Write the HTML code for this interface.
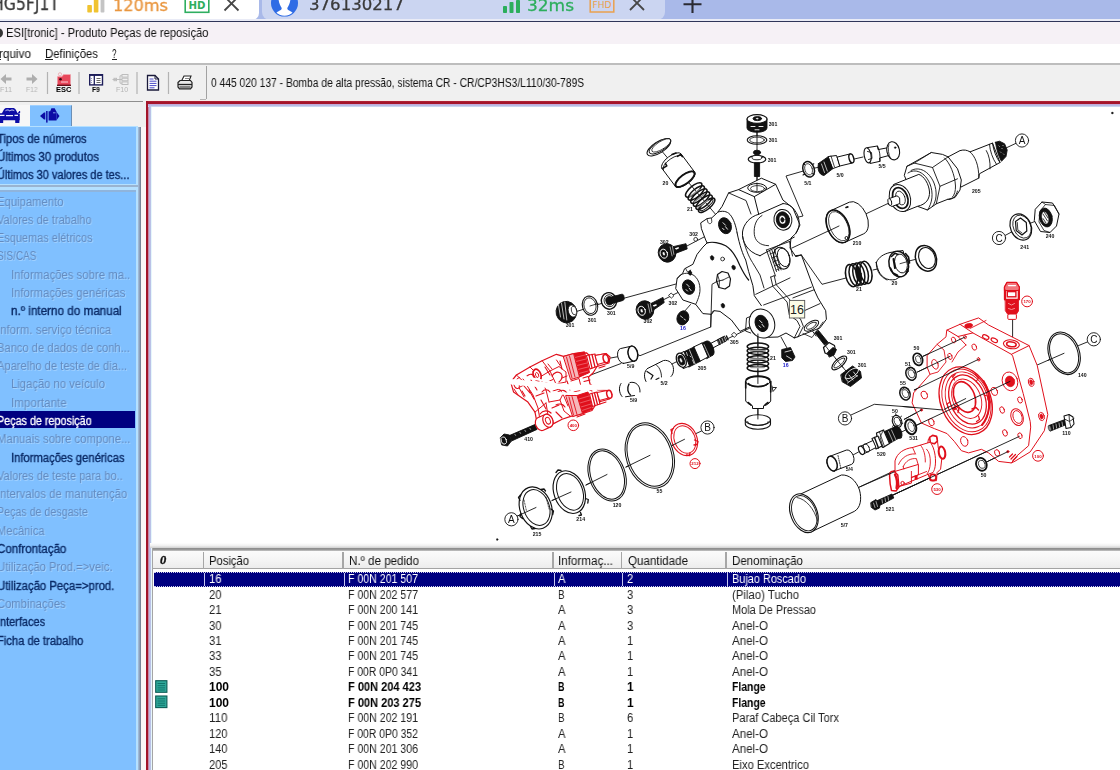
<!DOCTYPE html>
<html lang="pt">
<head>
<meta charset="utf-8">
<title>ESI[tronic] - Produto Peças de reposição</title>
<style>
*{box-sizing:border-box;margin:0;padding:0}
html,body{width:1120px;height:770px;overflow:hidden;background:#fff}
body{position:relative;font-family:"Liberation Sans",sans-serif;font-size:12px;color:#000}
.a{position:absolute}
.t{position:absolute;white-space:nowrap;transform-origin:0 50%;will-change:transform}
svg{position:absolute;overflow:visible}
</style>
</head>
<body>
<!-- remote session tab strip -->
<div class="a" style="left:0;top:0;width:1120px;height:20px;background:#a9b9e9"></div>
<div class="a" style="left:0;top:0;width:259px;height:20px;background:#fff;border-radius:0 0 7px 0"></div>
<div class="a" style="left:262px;top:0;width:403px;height:20px;background:#cbd5f1;border-radius:0 0 8px 8px"></div>
<div class="a" style="left:0;top:19px;width:1120px;height:2px;background:#e9ebf6"></div>
<div class="a" style="left:0;top:21px;width:1120px;height:1px;background:#30365a"></div>
<svg width="1120" height="21" viewBox="0 0 1120 21" style="left:0;top:0;overflow:hidden">
  <!-- signal bars 1 -->
  <rect x="87.3" y="5" width="4.6" height="7.5" rx="0.8" fill="#f0c330"/>
  <rect x="93.8" y="-1" width="4.6" height="13.5" rx="0.8" fill="#f0c330"/>
  <rect x="100.6" y="-1" width="3.8" height="13.5" rx="0.8" fill="#c4c4c4"/>
  <!-- HD badge -->
  <rect x="185.2" y="-3" width="23.6" height="15.3" fill="#fff" stroke="#2fae60" stroke-width="1.6"/>
  <text x="197" y="8.8" font-family="'DejaVu Sans','Liberation Sans',sans-serif" font-weight="bold" font-size="11" fill="#2fae60" text-anchor="middle" textLength="17" lengthAdjust="spacingAndGlyphs">HD</text>
  <!-- close 1 -->
  <path d="M224.5 -3.5L238.5 10.5M238.5 -3.5L224.5 10.5" stroke="#474747" stroke-width="1.8" fill="none"/>
  <!-- avatar -->
  <circle cx="284.5" cy="3.1" r="13.5" fill="#2f6ce5"/>
  <clipPath id="avc"><circle cx="284.5" cy="3.1" r="12.6"/></clipPath>
  <path clip-path="url(#avc)" d="M278.7 -6V0.5C279.2 4 280.6 6 281.7 8C281.9 9.6 280.5 10.4 278.6 11.2C277.2 11.8 276.3 12.6 275 14.5V18H294V14.5C292.7 12.6 291.8 11.8 290.4 11.2C288.5 10.4 287.1 9.6 287.3 8C288.4 6 289.8 4 290.3 0.5V-6z" fill="#fff"/>
  <!-- signal bars 2 -->
  <rect x="503" y="6" width="4" height="7" rx="0.8" fill="#2cae5c"/>
  <rect x="509.5" y="2" width="4" height="11" rx="0.8" fill="#2cae5c"/>
  <rect x="516" y="0" width="4" height="13" rx="0.8" fill="#2cae5c"/>
  <!-- FHD badge -->
  <rect x="590.2" y="-3" width="23.6" height="15" fill="none" stroke="#eaa04e" stroke-width="1.5"/>
  <text x="602" y="7.5" font-family="'DejaVu Sans','Liberation Sans',sans-serif" font-size="9.5" fill="#eaa04e" text-anchor="middle" textLength="19" lengthAdjust="spacingAndGlyphs">FHD</text>
  <!-- close 2 -->
  <path d="M630 -4L644 10M644 -4L630 10" stroke="#474747" stroke-width="1.8" fill="none"/>
  <!-- plus -->
  <path d="M683.5 4.2H701.5M692.5 -6V13" stroke="#2a2a33" stroke-width="2.1" fill="none"/>
</svg>
<!-- window chrome -->
<div class="a" style="left:0;top:22px;width:1120px;height:22px;background:#f6f1f6"></div>
<div class="a" style="left:0;top:44px;width:1120px;height:19px;background:#fff"></div>
<div class="a" style="left:0;top:63px;width:1120px;height:1.5px;background:#bdbdbd"></div>
<div class="a" style="left:0;top:64.5px;width:1120px;height:38px;background:#f0f0f0"></div>
<!-- app icon sliver -->
<div class="a" style="left:-7px;top:28px;width:10px;height:10px;border-radius:5px;background:#333"></div>
<!-- menu underlines -->
<div class="a" style="left:45px;top:58.8px;width:7.5px;height:1px;background:#222"></div>
<div class="a" style="left:111.5px;top:58.8px;width:5px;height:1px;background:#222"></div>
<div class="a" style="left:-2px;top:58.8px;width:2.5px;height:1px;background:#222"></div>
<!-- toolbar -->
<div class="a" style="left:0;top:100.8px;width:143px;height:1.2px;background:#8e8e8e"></div>
<div class="a" style="left:205.5px;top:66px;width:1.3px;height:33px;background:#a2a2a2"></div>
<div class="a" style="left:200px;top:98.5px;width:6px;height:1px;background:#b5b5b5"></div>
<svg width="210" height="40" viewBox="0 62 210 40" style="left:0;top:62px">
  <!-- back / fwd arrows (disabled) -->
  <path d="M0.5 79L6 74V77.5H11.5V80.5H6V84z" fill="#aeaeae"/>
  <path d="M37.5 79L32 74V77.5H26.5V80.5H32V84z" fill="#aeaeae"/>
  <!-- separators -->
  <g stroke="#b3b3b3" stroke-width="1.2"><path d="M47.5 72V94M79 72V94M137 72V94M168.5 72V94"/></g>
  <!-- ESC folder -->
  <path d="M57.5 76.5h4.5l1.5 -2h7v10.5h-13z" fill="#e8475a"/>
  <path d="M57 85.300h14" stroke="#6b0f1a" stroke-width="1.4"/>
  <path d="M57.5 76.5h4.5l1.5 -2h7" stroke="#f3a5ae" stroke-width="1" fill="none"/>
  <circle cx="60.5" cy="79.2" r="1.3" fill="#3b0810"/>
  <path d="M61 82h7" stroke="#fbd0d5" stroke-width="1"/>
  <circle cx="60" cy="74.3" r="1.6" fill="none" stroke="#e9a5ad" stroke-width="0.8"/>
  <!-- F9 panel icon -->
  <rect x="89.7" y="74.7" width="12.8" height="10.2" fill="#fff" stroke="#1e1e5a" stroke-width="1.4"/>
  <path d="M89.7 75h12.8" stroke="#1e1e5a" stroke-width="1.8"/>
  <path d="M94.3 75V85" stroke="#1e1e5a" stroke-width="1.3"/>
  <path d="M96.5 78.5h4M96.5 80.5h4M96.5 82.5h4" stroke="#555" stroke-width="0.9"/>
  <path d="M91.3 78v5" stroke="#7b7bb5" stroke-width="1" stroke-dasharray="1 1"/>
  <!-- F10 tree icon (disabled) -->
  <g fill="none" stroke="#bdbdbd" stroke-width="1">
    <rect x="122" y="74.5" width="6" height="2.6"/><rect x="122" y="78.2" width="6" height="2.6"/><rect x="122" y="81.9" width="6" height="2.6"/>
    <path d="M112.5 79.5h7.5M120 75.800V83.200M120 75.800h2M120 83.200h2M120 79.5h2"/>
    <rect x="114" y="78.3" width="2.5" height="2.4"/>
  </g>
  <!-- document icon -->
  <path d="M147.5 75.5h7.5l3.5 3.5v11h-11z" fill="#fff" stroke="#1a1a3a" stroke-width="1.3"/>
  <path d="M155 75.5v3.5h3.5" fill="none" stroke="#1a1a3a" stroke-width="1"/>
  <path d="M149.5 79h4M149.5 81.200h7M149.5 83.400h7M149.5 85.600h7M149.5 87.800h5" stroke="#4a4ac8" stroke-width="1"/>
  <!-- printer icon -->
  <path d="M181.5 81l2.5 -5h7l-2 5z" fill="#fff" stroke="#222" stroke-width="1.1"/>
  <path d="M185 78.5h4" stroke="#777" stroke-width="0.9"/>
  <path d="M178 82.5l2 -2h10.5l1.5 2v4.5l-1.5 1.800h-11l-1.5 -1.800z" fill="#e9e9e9" stroke="#222" stroke-width="1.2"/>
  <path d="M178 84.5h14" stroke="#222" stroke-width="1.3"/>
  <path d="M179.5 87h11" stroke="#222" stroke-width="1"/>
</svg>
<!-- sidebar -->
<div class="a" style="left:0;top:102px;width:146px;height:668px;background:#f0f0f0"></div>
<div class="a" style="left:141px;top:127px;width:5px;height:643px;background:#fbf6f8"></div>
<!-- sidebar tabs -->
<div class="a" style="left:0;top:105px;width:29.5px;height:21px;background:#f7f7f7"></div>
<div class="a" style="left:29.5px;top:105px;width:42px;height:22px;background:#80c0ff;border-right:1.5px solid #6b8fb5;border-top:1px solid #9fd0ff"></div>
<div class="a" style="left:0;top:125.7px;width:138px;height:61px;background:#b4e0ff"></div>
<div class="a" style="left:138px;top:126.5px;width:3px;height:644px;background:linear-gradient(90deg,#a9c4e0,#8a9db8 55%,#6d7786)"></div>
<div class="a" style="left:0;top:126.5px;width:135.5px;height:57.5px;background:#80c0ff"></div>
<div class="a" style="left:0;top:187px;width:138px;height:583px;background:#b4e0ff"></div>
<div class="a" style="left:0;top:184.7px;width:138px;height:2.5px;background:#9ab4d0"></div>
<div class="a" style="left:0;top:191.5px;width:135.5px;height:580px;background:#80c0ff"></div>
<div class="a" style="left:0;top:190px;width:136px;height:1.5px;background:#8fb4dc"></div>
<!-- selected item -->
<div class="a" style="left:0;top:411px;width:135px;height:17px;background:#000080"></div>
<svg width="80" height="24" viewBox="0 104 80 24" style="left:0;top:104px">
  <!-- car icon -->
  <g fill="#0c0ca6">
    <path d="M1.5 114l2.3 -4.300c0.6 -1.2 1.6 -1.8 3 -1.800h6c1.4 0 2.4 0.6 3 1.800l2.2 4.300z"/>
    <path d="M-1 113.300h19.800c0.6 0 1 0.4 1 1v6h-21.500z"/>
    <rect x="-1" y="119.5" width="4.2" height="3.6" rx="0.6"/><rect x="15.2" y="119.5" width="4.2" height="3.6" rx="0.6"/>
    <path d="M17.8 113l1.5 -2h0.800v2z"/>
  </g>
  <path d="M5.5 110.700c1.5 -1 3 -1 4.3 0.200c1.3 -1.2 3 -1.2 4.5 -0.2" fill="none" stroke="#e8ecff" stroke-width="0.9"/>
  <path d="M0 115.300h4.500M6 115.600h7M14.5 115.300h3.5" stroke="#f0f3ff" stroke-width="1.3"/>
  <!-- pump icon -->
  <g fill="#0c0ca6">
    <path d="M48.6 111.300h1.600l1.2 -3h3.300l1.5 3h0.300v9.300h-7.900z"/>
    <path d="M40 116l4 -3.500h1.300v7h-1.300z"/>
    <rect x="46.1" y="111" width="1.5" height="11.6"/>
    <path d="M56.5 112l3 4l-3 4.200z"/>
  </g>
  <path d="M53 112.800h2.5" stroke="#7f9fe8" stroke-width="1"/>
</svg>
<!-- main panel frame -->
<div class="a" style="left:146px;top:101px;width:980px;height:680px;background:#fff"></div>
<div class="a" style="left:146px;top:101px;width:980px;height:3px;background:linear-gradient(#b3283c,#a3142a 40%,#a8152c)"></div>
<div class="a" style="left:146px;top:101px;width:2px;height:680px;background:#a3142a"></div>
<div class="a" style="left:148px;top:104px;width:1px;height:680px;background:#c48aa8"></div>
<div class="a" style="left:148px;top:104px;width:975px;height:3px;background:linear-gradient(#c4a4d4,#b6c0e6 60%,#d8e6f6)"></div>
<div class="a" style="left:149px;top:105px;width:2px;height:670px;background:linear-gradient(90deg,#c0aedc,#b8c8ea)"></div>
<div class="a" style="left:151px;top:107px;width:1px;height:670px;background:#e6f6fc"></div>
<div class="a" style="left:146px;top:100px;width:980px;height:1px;background:#f8ece8"></div>

<!-- parts table -->
<div class="a" style="left:150px;top:543px;width:972px;height:5px;background:linear-gradient(#ffffff,#f1f1f1 50%,#cfcfcf)"></div>
<div class="a" style="left:151.5px;top:547.8px;width:970px;height:3.4px;background:linear-gradient(#8a8a8a,#9c9c9c 60%,#c9c9c9)"></div>
<div class="a" style="left:151.5px;top:547.8px;width:1.5px;height:225px;background:#a5a5a5"></div>
<div class="a" style="left:153px;top:551.2px;width:969px;height:18.3px;background:linear-gradient(#fbfbfb,#f5f5f5 50%,#ececec);border-bottom:1.4px solid #a3a3a3"></div>
<div class="a" style="left:202.6px;top:552px;width:1.6px;height:17px;background:#a6a6a6"></div>
<div class="a" style="left:342px;top:552px;width:1.6px;height:17px;background:#a6a6a6"></div>
<div class="a" style="left:552px;top:552px;width:1.6px;height:17px;background:#a6a6a6"></div>
<div class="a" style="left:620.6px;top:552px;width:1.6px;height:17px;background:#a6a6a6"></div>
<div class="a" style="left:725px;top:552px;width:1.6px;height:17px;background:#a6a6a6"></div>
<div class="t" style="left:159.6px;top:553px;font-family:'Liberation Serif',serif;font-style:italic;font-weight:bold;font-size:12.5px;line-height:14px;color:#111;-webkit-text-stroke:0.4px #111">0</div>
<!-- selected row -->
<div class="a" style="left:154px;top:571.5px;width:968px;height:15px;background:#000080;border-top:1px dotted #cfcfe8;border-bottom:1px dotted #cfcfe8"></div>
<div class="a" style="left:204px;top:573px;width:1px;height:13px;background:#c8c8f0"></div>
<div class="a" style="left:343.5px;top:573px;width:1px;height:13px;background:#c8c8f0"></div>
<div class="a" style="left:553.5px;top:573px;width:1px;height:13px;background:#c8c8f0"></div>
<div class="a" style="left:622px;top:573px;width:1px;height:13px;background:#c8c8f0"></div>
<div class="a" style="left:726.5px;top:573px;width:1px;height:13px;background:#c8c8f0"></div>
<!-- row icons -->
<svg width="14" height="32" viewBox="155 679 14 32" style="left:155px;top:679px">
  <g>
    <rect x="155.7" y="680.7" width="11.2" height="11.6" fill="#2fa89a" stroke="#0d5c55" stroke-width="1.1"/>
    <path d="M157.5 683.5h7.600M157.5 685.700h7.600M157.5 687.900h7.600M157.5 690h7.6" stroke="#0f6f66" stroke-width="0.9"/>
    <rect x="155.7" y="696" width="11.2" height="11.6" fill="#2fa89a" stroke="#0d5c55" stroke-width="1.1"/>
    <path d="M157.5 698.800h7.600M157.5 701h7.600M157.5 703.200h7.600M157.5 705.300h7.6" stroke="#0f6f66" stroke-width="0.9"/>
  </g>
</svg>

<!-- exploded view drawing -->
<svg width="1120" height="770" viewBox="0 0 1120 770" style="left:0;top:0">
<clipPath id="dclip"><rect x="150" y="107" width="970" height="440"/></clipPath>
<g clip-path="url(#dclip)" stroke-linecap="round">
<path d="M660 149L717 216" fill="none" stroke="#111" stroke-width="0.9" stroke-linejoin="round" />
<path d="M757 128L757 189" fill="none" stroke="#111" stroke-width="0.9" stroke-linejoin="round" />
<path d="M757.9 334L757.9 421" fill="none" stroke="#111" stroke-width="0.9" stroke-linejoin="round" />
<path d="M863 157L808.6 169.5L786 176L803 216L790 219" fill="none" stroke="#111" stroke-width="0.9" stroke-linejoin="round" />
<path d="M792 248L839 226" fill="none" stroke="#111" stroke-width="0.9" stroke-linejoin="round" />
<path d="M865 214.3L889 203" fill="none" stroke="#111" stroke-width="0.9" stroke-linejoin="round" />
<path d="M1006 148L1016 143.3" fill="none" stroke="#111" stroke-width="0.9" stroke-linejoin="round" />
<path d="M789 256.5L801.4 255L822 284.3L846 278" fill="none" stroke="#111" stroke-width="0.9" stroke-linejoin="round" />
<path d="M873 270L882 268" fill="none" stroke="#111" stroke-width="0.9" stroke-linejoin="round" />
<path d="M905 262L917 259" fill="none" stroke="#111" stroke-width="0.9" stroke-linejoin="round" />
<path d="M575 312L606 302" fill="none" stroke="#111" stroke-width="0.9" stroke-linejoin="round" />
<path d="M623 298.5L676 284" fill="none" stroke="#111" stroke-width="0.9" stroke-linejoin="round" />
<path d="M663 300L688 287.5" fill="none" stroke="#111" stroke-width="0.9" stroke-linejoin="round" />
<path d="M686 246.5L724 226.5" fill="none" stroke="#111" stroke-width="0.9" stroke-linejoin="round" />
<path d="M684 312L690.5 304.5" fill="none" stroke="#111" stroke-width="0.9" stroke-linejoin="round" />
<path d="M723 280L717 281.4L712 284.3L710.7 327L640 355.7L636 353.5" fill="none" stroke="#111" stroke-width="0.9" stroke-linejoin="round" />
<path d="M609 358.3L620 356.3" fill="none" stroke="#111" stroke-width="0.9" stroke-linejoin="round" />
<path d="M726 339.5L750 328" fill="none" stroke="#111" stroke-width="0.9" stroke-linejoin="round" />
<path d="M672 364L679 360.5" fill="none" stroke="#111" stroke-width="0.9" stroke-linejoin="round" />
<path d="M590.7 375L621 363.5" fill="none" stroke="#111" stroke-width="0.9" stroke-linejoin="round" />
<path d="M787 348L781 337" fill="none" stroke="#111" stroke-width="0.9" stroke-linejoin="round" />
<path d="M811 329L816 336" fill="none" stroke="#111" stroke-width="0.9" stroke-linejoin="round" />
<path d="M832 354L850 376" fill="none" stroke="#111" stroke-width="0.9" stroke-linejoin="round" />
<path d="M517.5 516L536 507.5" fill="none" stroke="#111" stroke-width="0.9" stroke-linejoin="round" />
<path d="M552 500.5L571 492" fill="none" stroke="#111" stroke-width="0.9" stroke-linejoin="round" />
<path d="M586 485L607 474.5" fill="none" stroke="#111" stroke-width="0.9" stroke-linejoin="round" />
<path d="M626 467L650 455.3" fill="none" stroke="#111" stroke-width="0.9" stroke-linejoin="round" />
<path d="M672 445.5L684.5 439.3" fill="none" stroke="#111" stroke-width="0.9" stroke-linejoin="round" />
<path d="M694 434.5L701.5 431" fill="none" stroke="#111" stroke-width="0.9" stroke-linejoin="round" />
<path d="M536 427L546 422" fill="none" stroke="#111" stroke-width="0.9" stroke-linejoin="round" />
<path d="M851 415L874.3 404.3L903 406.5L943 410" fill="none" stroke="#111" stroke-width="0.9" stroke-linejoin="round" />
<path d="M853 455L858.5 452" fill="none" stroke="#111" stroke-width="0.9" stroke-linejoin="round" />
<path d="M899 433.3L907 429.3" fill="none" stroke="#111" stroke-width="0.9" stroke-linejoin="round" />
<path d="M915.5 425.7L1010 381.4" fill="none" stroke="#111" stroke-width="0.9" stroke-linejoin="round" />
<path d="M904.3 419.3L921.4 410" fill="none" stroke="#111" stroke-width="0.9" stroke-linejoin="round" />
<path d="M914.3 390L978.6 359.3" fill="none" stroke="#111" stroke-width="0.9" stroke-linejoin="round" />
<path d="M917.5 372L950 356.4" fill="none" stroke="#111" stroke-width="0.9" stroke-linejoin="round" />
<path d="M923 356.3L965 337.1" fill="none" stroke="#111" stroke-width="0.9" stroke-linejoin="round" />
<path d="M944.3 409.3L965.7 398.6" fill="none" stroke="#111" stroke-width="0.9" stroke-linejoin="round" />
<path d="M859.5 487L897 469.5" fill="none" stroke="#111" stroke-width="0.9" stroke-linejoin="round" />
<path d="M893 495L1019.3 436.4" fill="none" stroke="#111" stroke-width="0.9" stroke-linejoin="round" />
<path d="M986.5 462L1007.9 451.6" fill="none" stroke="#111" stroke-width="0.9" stroke-linejoin="round" />
<path d="M1012.6 319L1012.6 343" fill="none" stroke="#111" stroke-width="0.9" stroke-linejoin="round" />
<path d="M1037.2 365L1064 353.3" fill="none" stroke="#111" stroke-width="0.9" stroke-linejoin="round" />
<path d="M1078.5 345.6L1087.8 341.8" fill="none" stroke="#111" stroke-width="0.9" stroke-linejoin="round" />
<path d="M1005 235.5L1021 227" fill="none" stroke="#111" stroke-width="0.9" stroke-linejoin="round" />
<path d="M1031 223L1046 217" fill="none" stroke="#111" stroke-width="0.9" stroke-linejoin="round" />
<path d="M747 119V128A10 4.3 0 0 0 767 128V119z" fill="#111" stroke="#111" stroke-width="0.9" stroke-linejoin="round" stroke-linecap="round" />
<ellipse cx="757" cy="119" rx="10" ry="4.4" fill="#fff" stroke="#111" stroke-width="1.1" />
<ellipse cx="757.3" cy="118.6" rx="4.3" ry="2" fill="#111" stroke="#111" stroke-width="0.9" />
<ellipse cx="757.3" cy="118.6" rx="1.6" ry="0.8" fill="#fff" stroke="#111" stroke-width="0.3" />
<path d="M751 126.5h4M759 126.5h4M755 129.8h4" fill="none" stroke="#fff" stroke-width="0.9" stroke-linejoin="round" stroke-linecap="round" />
<text x="773" y="125.8" font-family="'Liberation Sans',sans-serif" font-size="5.2" font-weight="bold" fill="#111" text-anchor="middle">301</text>
<ellipse cx="757" cy="140" rx="9.8" ry="4.3" fill="#fff" stroke="#111" stroke-width="1.1" />
<ellipse cx="757" cy="140" rx="7.3" ry="2.9" fill="#fff" stroke="#111" stroke-width="0.8" />
<path d="M757 131L757 144" fill="none" stroke="#111" stroke-width="0.9" stroke-linejoin="round" />
<text x="773" y="141.8" font-family="'Liberation Sans',sans-serif" font-size="5.2" font-weight="bold" fill="#111" text-anchor="middle">301</text>
<ellipse cx="757" cy="152.5" rx="3.6" ry="2.3" fill="#111" stroke="#111" stroke-width="0.9" />
<ellipse cx="757" cy="159.3" rx="8.8" ry="3.8" fill="#fff" stroke="#111" stroke-width="1.2" />
<ellipse cx="757" cy="157.6" rx="5" ry="2.2" fill="#fff" stroke="#111" stroke-width="0.9" />
<path d="M754.4 163V176.5h5.2V163z" fill="#111" stroke="#111" stroke-width="0.9" stroke-linejoin="round" stroke-linecap="round" />
<text x="772" y="161.8" font-family="'Liberation Sans',sans-serif" font-size="5.2" font-weight="bold" fill="#111" text-anchor="middle">301</text>
<path d="M757 176L757 189" fill="none" stroke="#111" stroke-width="0.9" stroke-linejoin="round" />
<ellipse cx="658.8" cy="147.4" rx="5.6" ry="13.4" fill="#fff" stroke="#111" stroke-width="1.1" transform="rotate(58 658.8 147.4)" />
<ellipse cx="660" cy="146.2" rx="4.9" ry="12.4" fill="#fff" stroke="#111" stroke-width="0.9" transform="rotate(58 660 146.2)" />
<ellipse cx="661.3" cy="145.4" rx="3.9" ry="11" fill="none" stroke="#111" stroke-width="0.7" transform="rotate(58 661.3 145.4)" />
<path d="M661.8 168.2L675.4 186.4A5 12 53.2 0 0 694.6 172L681 153.8A5 12 53.2 0 0 661.8 168.2z" fill="#fff" stroke="#111" stroke-width="1.0" stroke-linejoin="round"/>
<ellipse cx="685" cy="179.2" rx="5" ry="12" fill="#fff" stroke="#111" stroke-width="1.0" transform="rotate(53.2 685 179.2)" />
<ellipse cx="685" cy="179.2" rx="4.4" ry="11.3" fill="#fff" stroke="#111" stroke-width="1.6" transform="rotate(53 685 179.2)" />
<path d="M682.9 156.3A5.0 12 55.3 0 0 663.2 170.0" fill="none" stroke="#111" stroke-width="0.9" stroke-linejoin="round" stroke-linecap="round" />
<path d="M663.2 168.2l3.6 -2.4l-1.4 -2.4M677.5 156.4l3.2 -2l1.6 2.2" fill="none" stroke="#111" stroke-width="1.6" stroke-linejoin="round" stroke-linecap="round" />
<path d="M672 154.5l4 -1.5" fill="none" stroke="#111" stroke-width="1.6" stroke-linejoin="round" stroke-linecap="round" />
<text x="665.5" y="185.3" font-family="'Liberation Sans',sans-serif" font-size="5.2" font-weight="bold" fill="#111" text-anchor="middle">20</text>
<ellipse cx="693.7" cy="189.9" rx="3.9" ry="10.2" fill="none" stroke="#111" stroke-width="1.5" transform="rotate(49.8 693.7 189.9)" />
<ellipse cx="696.3" cy="193" rx="3.9" ry="10.2" fill="none" stroke="#111" stroke-width="1.5" transform="rotate(49.8 696.3 193)" />
<ellipse cx="698.9" cy="196.1" rx="3.9" ry="10.2" fill="none" stroke="#111" stroke-width="1.5" transform="rotate(49.8 698.9 196.1)" />
<ellipse cx="701.5" cy="199.1" rx="3.9" ry="10.2" fill="none" stroke="#111" stroke-width="1.5" transform="rotate(49.8 701.5 199.1)" />
<ellipse cx="704.1" cy="202.2" rx="3.9" ry="10.2" fill="none" stroke="#111" stroke-width="1.5" transform="rotate(49.8 704.1 202.2)" />
<ellipse cx="706.7" cy="205.3" rx="3.9" ry="10.2" fill="none" stroke="#111" stroke-width="1.5" transform="rotate(49.8 706.7 205.3)" />
<ellipse cx="706.3" cy="204.8" rx="2.6" ry="8.4" fill="none" stroke="#111" stroke-width="1.0" transform="rotate(50 706.3 204.8)" />
<path d="M690 196.5l10 -7.5M694 202l10 -7.5M698 207.5l10 -7.5" fill="none" stroke="#8c8c8c" stroke-width="1.2" stroke-linejoin="round" stroke-linecap="round" />
<text x="690" y="210.8" font-family="'Liberation Sans',sans-serif" font-size="5.2" font-weight="bold" fill="#111" text-anchor="middle">21</text>
<path d="M717.9 212.1L722.1 206.4L728.6 192.9L738.6 189.6L761.4 178.2L775.7 184.3L782.9 200L792.9 208L800 225L795.7 233.6L791 238L790 248L795.7 256.4L801.4 255L814.3 290L817.9 297.9L825.7 310.7L826.4 319.3L820 327.9L801.4 335.2L794.5 338L786 333L778 337L768.6 337.3L757.1 334.3L750.7 326.4L740 331.4L731.4 320L720 311.4L714.3 310.7L711.4 314.3L702.9 313.6L695.7 304.3L682.9 300L675.7 288.6L677.1 278.6L682.9 272.9L684.5 268.8L692.9 264.3L697.1 254.300L702.9 247.1L707.1 242.9L705.7 240L701.4 228.6L700.7 222.9L707.1 218.6L711.4 217.9z" fill="#fff" stroke="#111" stroke-width="1.0" stroke-linejoin="round" stroke-linecap="round" />
<path d="M738.6 189.6L754.3 196.6L775.7 184.3" fill="none" stroke="#111" stroke-width="1.0" stroke-linejoin="round" />
<path d="M754.3 196.6L758.6 213.8" fill="none" stroke="#111" stroke-width="1.0" stroke-linejoin="round" />
<path d="M728.6 192.9L746 200.5L751 214" fill="none" stroke="#111" stroke-width="0.9" stroke-linejoin="round" />
<ellipse cx="757.1" cy="187.9" rx="9.4" ry="4.4" fill="#fff" stroke="#111" stroke-width="1.0" />
<ellipse cx="757.5" cy="188.6" rx="7" ry="3" fill="#fff" stroke="#111" stroke-width="0.8" />
<path d="M757 183L757 190.5" fill="none" stroke="#111" stroke-width="0.9" stroke-linejoin="round" />
<path d="M758.6 214.3L782.9 203.6M760 255.7L783 243L794.3 237.1" fill="none" stroke="#111" stroke-width="1.0" stroke-linejoin="round" stroke-linecap="round" />
<path d="M758.6 214.3C750 216.5 743.5 224 742.5 232C741.8 241.5 747 252 760 255.7" fill="none" stroke="#111" stroke-width="1.0" stroke-linejoin="round" stroke-linecap="round" />
<path d="M762 215.5C756 219 753.6 226 754.3 234.300C755 240.5 759.5 245.5 768.6 245.7" fill="none" stroke="#111" stroke-width="0.9" stroke-linejoin="round" stroke-linecap="round" />
<path d="M782.9 203.6C789 203.5 794 207.5 797.5 215C800 221.5 800 228 795.7 233.6" fill="none" stroke="#111" stroke-width="1.0" stroke-linejoin="round" stroke-linecap="round" />
<ellipse cx="782.9" cy="219.8" rx="9" ry="10.4" fill="#fff" stroke="#111" stroke-width="1.0" transform="rotate(-10 782.9 219.8)" />
<ellipse cx="782.9" cy="219.8" rx="6.6" ry="8" fill="#111" stroke="#111" stroke-width="0.9" transform="rotate(-10 782.9 219.8)" />
<ellipse cx="782.4" cy="219.8" rx="3.2" ry="4.3" fill="#fff" stroke="#111" stroke-width="0.4" transform="rotate(-10 782.4 219.8)" />
<ellipse cx="782.4" cy="219.8" rx="1.5" ry="2.2" fill="#111" stroke="#111" stroke-width="0.9" transform="rotate(-10 782.4 219.8)" />
<path d="M737.1 232.9C739.5 245 743 255 745.7 260L748.6 271.4L752.9 285.7L754.3 295.7L761.4 305.7" fill="none" stroke="#111" stroke-width="1.0" stroke-linejoin="round" stroke-linecap="round" />
<path d="M742.5 236C744.5 246 748.5 256.5 752.5 262.5L760 275L764 288" fill="none" stroke="#111" stroke-width="0.9" stroke-linejoin="round" stroke-linecap="round" />
<path d="M717.9 212.1C722 210.5 727 211 730 214.5C733.5 218.5 736 226 737.1 232.9" fill="none" stroke="#111" stroke-width="1.0" stroke-linejoin="round" stroke-linecap="round" />
<path d="M707.1 242.9C712 241.5 720 242.5 725.7 245.7C731 249 736 256 740 265.7C743 272 746.5 277.5 748.6 280" fill="none" stroke="#111" stroke-width="1.2" stroke-linejoin="round" stroke-linecap="round" />
<path d="M766.5 250L789.5 241.5M766.5 250L775.5 276M789.5 241.5L792.5 256" fill="none" stroke="#111" stroke-width="0.9" stroke-linejoin="round" stroke-linecap="round" />
<ellipse cx="781.8" cy="258.2" rx="7.8" ry="11.2" fill="#fff" stroke="#111" stroke-width="1.1" transform="rotate(-18 781.8 258.2)" />
<ellipse cx="783.6" cy="257.4" rx="5.8" ry="9.5" fill="#fff" stroke="#111" stroke-width="0.9" transform="rotate(-18 783.6 257.4)" />
<path d="M769.5 250.5l7 21M771.8 249.700l7 21M774.1 248.900l7 21" fill="none" stroke="#111" stroke-width="0.9" stroke-linejoin="round" stroke-linecap="round" />
<path d="M770 254l5.5 -2M771.5 258l5.5 -2M773 262l5.5 -2M774.5 266l5.5 -2M776 270l5.5 -2" fill="none" stroke="#111" stroke-width="0.7" stroke-linejoin="round" stroke-linecap="round" />
<path d="M755.7 294.3L790 277.9M763.6 305L811.4 287.1M792.9 297.9L814 289.800M804.3 310.7L820 303.6" fill="none" stroke="#111" stroke-width="0.9" stroke-linejoin="round" stroke-linecap="round" />
<path d="M795.7 256.4L801.4 255" fill="none" stroke="#111" stroke-width="0.9" stroke-linejoin="round" stroke-linecap="round" />
<path d="M770.7 277.1L772.9 286.4L787.1 302.1L789.3 315L797.1 320.7L800 326.4L794.3 337.9" fill="none" stroke="#111" stroke-width="0.9" stroke-linejoin="round" stroke-linecap="round" />
<path d="M774.2 275.700L776.2 284.700L790.5 300.5L792.7 313L800.4 318.800L803.4 326.400L798 337" fill="none" stroke="#111" stroke-width="0.9" stroke-linejoin="round" stroke-linecap="round" />
<path d="M770.7 277.1l3.5 -1.4" fill="none" stroke="#111" stroke-width="0.9" stroke-linejoin="round" stroke-linecap="round" />
<ellipse cx="811.4" cy="325.7" rx="8.2" ry="4" fill="#fff" stroke="#111" stroke-width="1.0" transform="rotate(-32 811.4 325.7)" />
<ellipse cx="811.4" cy="325.7" rx="5.6" ry="2.4" fill="#fff" stroke="#111" stroke-width="0.8" transform="rotate(-32 811.4 325.7)" />
<path d="M803 333.5L812 337.5L823 322" fill="none" stroke="#111" stroke-width="0.8" stroke-linejoin="round" stroke-linecap="round" />
<ellipse cx="762" cy="323.5" rx="12.5" ry="14.8" fill="#fff" stroke="#111" stroke-width="1.0" transform="rotate(-20 762 323.5)" />
<path d="M750.5 316.5L746.5 318L745.5 331L750.7 333" fill="none" stroke="#111" stroke-width="0.9" stroke-linejoin="round" stroke-linecap="round" />
<ellipse cx="725" cy="225.7" rx="6.2" ry="8.2" fill="#111" stroke="#111" stroke-width="0.9" transform="rotate(-20 725 225.7)" />
<path d="M723.0 222.7l2.5 2.5M725.5 226.7l2 2.5M722.5 228.2l1.5 1.5" fill="none" stroke="#fff" stroke-width="0.9" stroke-linejoin="round" stroke-linecap="round" />
<ellipse cx="688.6" cy="287.1" rx="6" ry="7.4" fill="#111" stroke="#111" stroke-width="0.9" transform="rotate(-20 688.6 287.1)" />
<path d="M686.6 284.1l2.5 2.5M689.1 288.1l2 2.5M686.1 289.6l1.5 1.5" fill="none" stroke="#fff" stroke-width="0.9" stroke-linejoin="round" stroke-linecap="round" />
<ellipse cx="761.6" cy="323.4" rx="6.3" ry="8.4" fill="#111" stroke="#111" stroke-width="0.9" transform="rotate(-20 761.6 323.4)" />
<path d="M759.6 320.4l2.5 2.5M762.1 324.4l2 2.5M759.1 325.9l1.5 1.5" fill="none" stroke="#fff" stroke-width="0.9" stroke-linejoin="round" stroke-linecap="round" />
<path d="M677.1 278.6C680 273 688 271.5 694 275.5C700 280 701.5 290 698.5 297.5C697.5 300.5 696.5 303 695.7 304.3" fill="none" stroke="#111" stroke-width="0.9" stroke-linejoin="round" stroke-linecap="round" />
<ellipse cx="712.1" cy="257.9" rx="1.7" ry="2.4" fill="#111" stroke="#111" stroke-width="0.5" transform="rotate(-20 712.1 257.9)" />
<ellipse cx="733.6" cy="267.5" rx="1.7" ry="2.4" fill="#111" stroke="#111" stroke-width="0.5" transform="rotate(-20 733.6 267.5)" />
<ellipse cx="690" cy="272.9" rx="1.7" ry="2.4" fill="#111" stroke="#111" stroke-width="0.5" transform="rotate(-20 690 272.9)" />
<ellipse cx="722.9" cy="305.7" rx="1.7" ry="2.4" fill="#111" stroke="#111" stroke-width="0.5" transform="rotate(-20 722.9 305.7)" />
<circle cx="722.6" cy="259" r="1.9" fill="#fff" stroke="#111" stroke-width="0.8"/>
<path d="M717.5 274.5L722 271.5L728 273L730.5 279L729.5 286L725 289L719 287.5L716.5 281z" fill="#fff" stroke="#111" stroke-width="1.2" stroke-linejoin="round" stroke-linecap="round" />
<path d="M717.5 274.5L719.5 281L719 287.5" fill="none" stroke="#111" stroke-width="0.8" stroke-linejoin="round" stroke-linecap="round" />
<path d="M723 280L729 277" fill="none" stroke="#111" stroke-width="0.8" stroke-linejoin="round" />
<path d="M707 219l1 3.5c1 1.8 3.5 1.4 3.8 -0.800l-0.3 -3.2" fill="none" stroke="#111" stroke-width="0.8" stroke-linejoin="round" stroke-linecap="round" />
<path d="M685.7 268.600l1.5 3c1.4 1.2 3.5 0.5 3.5 -1.5" fill="none" stroke="#111" stroke-width="0.8" stroke-linejoin="round" stroke-linecap="round" />
<path d="M711.4 314.300l1.5 -3.200l1.4 -0.4" fill="none" stroke="#111" stroke-width="0.8" stroke-linejoin="round" stroke-linecap="round" />
<path d="M723 280L717 281.4L712 284.3L710.7 327" fill="none" stroke="#111" stroke-width="0.9" stroke-linejoin="round" />
<rect x="789.4" y="300.4" width="15.3" height="17.6" fill="#fcfce6" stroke="#555" stroke-width="0.9"/>
<text x="797" y="313.8" font-family="'Liberation Sans',sans-serif" font-size="12.5" font-weight="normal" fill="#222" text-anchor="middle">16</text>
<path d="M672.1 246.9L686 243.70000000000002L687.2 248.9L674.1 253.9z" fill="#111" stroke="#111" stroke-width="0.9" stroke-linejoin="round" stroke-linecap="round" />
<path d="M673.1 249.9L678.1 247.9" fill="none" stroke="#fff" stroke-width="1.6" stroke-linejoin="round" stroke-linecap="round" />
<ellipse cx="667.1" cy="252.9" rx="8.8" ry="9.3" fill="#111" stroke="#111" stroke-width="0.9" transform="rotate(-20 667.1 252.9)" />
<ellipse cx="663.8" cy="253.7" rx="3.6" ry="4.6" fill="none" stroke="#fff" stroke-width="0.9" transform="rotate(-20 663.8 253.7)" />
<ellipse cx="663.8" cy="253.7" rx="1.2" ry="1.8" fill="#fff" stroke="#111" stroke-width="0.2" transform="rotate(-20 663.8 253.7)" />
<path d="M670.1 246.9l2 9M672.4 246.4l1.5 8" fill="none" stroke="#fff" stroke-width="0.6" stroke-linejoin="round" stroke-linecap="round" />
<text x="664.3" y="243.9" font-family="'Liberation Sans',sans-serif" font-size="5.2" font-weight="bold" fill="#111" text-anchor="middle">302</text>
<circle cx="695.7" cy="239.3" r="1.9" fill="#fff" stroke="#111" stroke-width="0.8"/>
<text x="693.6" y="236.1" font-family="'Liberation Sans',sans-serif" font-size="5.2" font-weight="bold" fill="#111" text-anchor="middle">302</text>
<path d="M650 304L663 297.4L664.2 302.6L652 311z" fill="#111" stroke="#111" stroke-width="0.9" stroke-linejoin="round" stroke-linecap="round" />
<path d="M651 307L656 305" fill="none" stroke="#fff" stroke-width="1.6" stroke-linejoin="round" stroke-linecap="round" />
<ellipse cx="645" cy="310" rx="8.8" ry="9.3" fill="#111" stroke="#111" stroke-width="0.9" transform="rotate(-20 645 310)" />
<ellipse cx="641.7" cy="310.8" rx="3.6" ry="4.6" fill="none" stroke="#fff" stroke-width="0.9" transform="rotate(-20 641.7 310.8)" />
<ellipse cx="641.7" cy="310.8" rx="1.2" ry="1.8" fill="#fff" stroke="#111" stroke-width="0.2" transform="rotate(-20 641.7 310.8)" />
<path d="M648 304l2 9M650.3 303.5l1.5 8" fill="none" stroke="#fff" stroke-width="0.6" stroke-linejoin="round" stroke-linecap="round" />
<text x="647.9" y="323.2" font-family="'Liberation Sans',sans-serif" font-size="5.2" font-weight="bold" fill="#111" text-anchor="middle">302</text>
<path d="M671.4 293.300l2.6 2.400l-2.6 2.400l-2.6 -2.400z" fill="#fff" stroke="#111" stroke-width="0.8" stroke-linejoin="round" stroke-linecap="round" />
<text x="672.9" y="305.4" font-family="'Liberation Sans',sans-serif" font-size="5.2" font-weight="bold" fill="#111" text-anchor="middle">302</text>
<ellipse cx="566.4" cy="312.1" rx="10.3" ry="10.8" fill="#111" stroke="#111" stroke-width="0.9" transform="rotate(-15 566.4 312.1)" />
<ellipse cx="572.5" cy="311" rx="4.2" ry="6.2" fill="#fff" stroke="#111" stroke-width="0.8" transform="rotate(-15 572.5 311)" />
<ellipse cx="574" cy="310.5" rx="2.6" ry="4.4" fill="#fff" stroke="#111" stroke-width="0.7" transform="rotate(-15 574 310.5)" />
<path d="M558.5 305l2 12M561.5 303l2.5 16M564.8 302l2 18" fill="none" stroke="#fff" stroke-width="0.7" stroke-linejoin="round" stroke-linecap="round" />
<text x="570" y="326.8" font-family="'Liberation Sans',sans-serif" font-size="5.2" font-weight="bold" fill="#111" text-anchor="middle">301</text>
<ellipse cx="590" cy="305.7" rx="7.6" ry="9.7" fill="#fff" stroke="#111" stroke-width="1.1" transform="rotate(-15 590 305.7)" />
<ellipse cx="590" cy="305.7" rx="6" ry="8" fill="#fff" stroke="#111" stroke-width="0.8" transform="rotate(-15 590 305.7)" />
<path d="M590 306L598 303.5" fill="none" stroke="#111" stroke-width="0.8" stroke-linejoin="round" />
<text x="592.1" y="321.8" font-family="'Liberation Sans',sans-serif" font-size="5.2" font-weight="bold" fill="#111" text-anchor="middle">301</text>
<ellipse cx="609" cy="300.9" rx="7.6" ry="8.3" fill="#fff" stroke="#111" stroke-width="1.4" transform="rotate(-15 609 300.9)" />
<ellipse cx="609.5" cy="300.7" rx="5.4" ry="6" fill="#fff" stroke="#111" stroke-width="0.8" transform="rotate(-15 609.5 300.7)" />
<ellipse cx="609.3" cy="300.8" rx="3.4" ry="4.2" fill="#111" stroke="#111" stroke-width="0.9" transform="rotate(-15 609.3 300.8)" />
<path d="M609 297.6l12.5 -3.3c1.6 -0.2 2.2 0.6 2.4 2l0.3 2.2c0 1.2 -0.6 1.8 -2 2.2l-11.5 3.2z" fill="#111" stroke="#111" stroke-width="0.9" stroke-linejoin="round" stroke-linecap="round" />
<text x="611.4" y="314.7" font-family="'Liberation Sans',sans-serif" font-size="5.2" font-weight="bold" fill="#111" text-anchor="middle">301</text>
<ellipse cx="682.9" cy="317.9" rx="5.8" ry="7.2" fill="#111" stroke="#111" stroke-width="0.9" transform="rotate(20 682.9 317.9)" />
<path d="M680.5 316l2 1.5M684 319l1.5 1" fill="none" stroke="#fff" stroke-width="0.8" stroke-linejoin="round" stroke-linecap="round" />
<text x="682.9" y="330.4" font-family="'Liberation Sans',sans-serif" font-size="5.2" font-weight="bold" fill="#1818c8" text-anchor="middle">16</text>
<path d="M782 349.5L790.5 347.5L795 357L792.5 360.5L785.5 361.5L782 358z" fill="#111" stroke="#111" stroke-width="0.9" stroke-linejoin="round" stroke-linecap="round" />
<path d="M785 352l6 -1.5M786.5 356l5 3" fill="none" stroke="#fff" stroke-width="0.8" stroke-linejoin="round" stroke-linecap="round" />
<text x="785.7" y="366.8" font-family="'Liberation Sans',sans-serif" font-size="5.2" font-weight="bold" fill="#1818c8" text-anchor="middle">16</text>
<ellipse cx="808.6" cy="169.3" rx="5.6" ry="8" fill="#fff" stroke="#111" stroke-width="1.5" transform="rotate(-18 808.6 169.3)" />
<ellipse cx="808.6" cy="169.3" rx="3.7" ry="5.8" fill="#fff" stroke="#111" stroke-width="0.7" transform="rotate(-18 808.6 169.3)" />
<path d="M803.5 163.5l1.2 1M803 175l1.5 -0.800M813.8 163.800l-1.3 0.800M814 174.5l-1.4 -0.9" fill="none" stroke="#111" stroke-width="1.1" stroke-linejoin="round" stroke-linecap="round" />
<text x="807.9" y="184.8" font-family="'Liberation Sans',sans-serif" font-size="5.2" font-weight="bold" fill="#111" text-anchor="middle">5/1</text>
<path d="M818.5 163.5L828.5 156.5L833 168.5L824 175.5C819 175 817 169 818.5 163.5z" fill="#111" stroke="#111" stroke-width="0.9" stroke-linejoin="round" stroke-linecap="round" />
<path d="M828.5 156.5L836.5 155.5L840 166L833 168.5z" fill="#fff" stroke="#111" stroke-width="1.0" stroke-linejoin="round" stroke-linecap="round" />
<path d="M821.5 164l3 8.5M824 162l3.3 9" fill="none" stroke="#fff" stroke-width="0.7" stroke-linejoin="round" stroke-linecap="round" />
<path d="M831 156l3.5 11" fill="none" stroke="#111" stroke-width="0.8" stroke-linejoin="round" stroke-linecap="round" />
<path d="M837.5 157L850.5 153.800L852.3 163L840 166z" fill="#fff" stroke="#111" stroke-width="1.0" stroke-linejoin="round" stroke-linecap="round" />
<ellipse cx="851.4" cy="158.4" rx="2.3" ry="4.6" fill="#fff" stroke="#111" stroke-width="1.4" transform="rotate(-15 851.4 158.4)" />
<text x="840" y="176.8" font-family="'Liberation Sans',sans-serif" font-size="5.2" font-weight="bold" fill="#111" text-anchor="middle">5/0</text>
<path d="M867.5 147.6L877.5 146L878 149.6L888.5 147.6L890 155.2L879.5 158L880 161.3L870.5 163.4z" fill="#fff" stroke="#111" stroke-width="1.0" stroke-linejoin="round" stroke-linecap="round" />
<ellipse cx="867.6" cy="155.3" rx="3.4" ry="7.7" fill="#fff" stroke="#111" stroke-width="1.1" transform="rotate(-10 867.6 155.3)" />
<path d="M867.5 151.5L871.5 152.5L872 158.5L868.5 159.5" fill="none" stroke="#111" stroke-width="0.9" stroke-linejoin="round" stroke-linecap="round" />
<path d="M877.5 146C879.5 150 880.5 156 880 161.3" fill="none" stroke="#111" stroke-width="0.9" stroke-linejoin="round" stroke-linecap="round" />
<ellipse cx="893.2" cy="150.8" rx="6.3" ry="9.2" fill="#fff" stroke="#111" stroke-width="1.1" transform="rotate(-12 893.2 150.8)" />
<path d="M888.8 144.6C887.6 148.5 888.4 154.5 890.6 158.8" fill="none" stroke="#111" stroke-width="0.8" stroke-linejoin="round" stroke-linecap="round" />
<circle cx="895.2" cy="147.6" r="0.9" fill="#111" stroke="#111" stroke-width="0.4"/>
<text x="882" y="167.5" font-family="'Liberation Sans',sans-serif" font-size="5.2" font-weight="bold" fill="#111" text-anchor="middle">5/5</text>
<path d="M845.2 242.2L863.7 233.8A10.4 17.3 -24.4 0 0 849.3 202.2L830.8 210.6A10.4 17.3 -24.4 0 0 845.2 242.2z" fill="#fff" stroke="#111" stroke-width="1.0" stroke-linejoin="round"/>
<ellipse cx="838" cy="226.4" rx="10.4" ry="17.3" fill="#fff" stroke="#111" stroke-width="1.0" transform="rotate(-24.4 838 226.4)" />
<ellipse cx="838" cy="226.4" rx="10.4" ry="17.3" fill="#fff" stroke="#111" stroke-width="1.6" transform="rotate(-24.5 838 226.4)" />
<ellipse cx="838.8" cy="226.2" rx="8.8" ry="15.6" fill="none" stroke="#111" stroke-width="0.7" transform="rotate(-24.5 838.8 226.2)" />
<path d="M829 230.8L839 226" fill="none" stroke="#111" stroke-width="0.9" stroke-linejoin="round" />
<path d="M846 207.5l1.8 -0.6" fill="none" stroke="#111" stroke-width="1.7" stroke-linejoin="round" stroke-linecap="round" />
<circle cx="846.5" cy="238" r="1.5" fill="#fff" stroke="#111" stroke-width="1.0"/>
<text x="857" y="244.7" font-family="'Liberation Sans',sans-serif" font-size="5.2" font-weight="bold" fill="#111" text-anchor="middle">210</text>
<path d="M948.1 156.9L960 150.6C964 149.5 967 150 970 151.9L992.5 143.1L1000 162.5L979.4 173.8L978.8 178.1L961.3 186.9z" fill="#fff" stroke="#111" stroke-width="1.0" stroke-linejoin="round" stroke-linecap="round" />
<path d="M970 151.9C975 156 979 165 978.8 178.1" fill="none" stroke="#111" stroke-width="0.9" stroke-linejoin="round" stroke-linecap="round" />
<path d="M986.3 150.6C989 155 990.5 162 990 168.8" fill="none" stroke="#111" stroke-width="0.9" stroke-linejoin="round" stroke-linecap="round" />
<path d="M995.5 142.3L999.5 141.2L1004.6 143.8L1007.2 150L1006 156.5L1001.5 161.3C998.5 156.5 996.5 149.5 995.5 142.3z" fill="#111" stroke="#111" stroke-width="0.9" stroke-linejoin="round" stroke-linecap="round" />
<path d="M992.5 143.1C993.5 150 996 157.5 1000 162.5" fill="none" stroke="#111" stroke-width="1.0" stroke-linejoin="round" stroke-linecap="round" />
<path d="M999 146l0.3 0.3M1002 148.5l0.3 0.3M1000.5 152l0.3 0.3M1003.5 154l0.3 0.3M1003 145.5l0.3 0.3" fill="none" stroke="#fff" stroke-width="0.8" stroke-linejoin="round" stroke-linecap="round" />
<path d="M989.5 144.3C990 151 992.5 158.5 996.5 164.3" fill="none" stroke="#111" stroke-width="0.9" stroke-linejoin="round" stroke-linecap="round" />
<path d="M904.4 175L906.9 166.3L931.3 152.5L942.5 154.4L948.1 156.9L957.5 168.8L961.3 180L960 190L955 197.5L947.5 199.4L936.3 203.8L927.5 210L917.5 206.3z" fill="#fff" stroke="#111" stroke-width="1.0" stroke-linejoin="round" stroke-linecap="round" />
<path d="M906.9 166.3L914.4 163.1L932.5 167.5L948.1 156.9M932.5 167.5L940 186.3L936.3 203.8M940 186.3L957.5 178.8" fill="none" stroke="#111" stroke-width="0.9" stroke-linejoin="round" stroke-linecap="round" />
<path d="M914.4 163.1L931.3 152.5" fill="none" stroke="#111" stroke-width="0.8" stroke-linejoin="round" stroke-linecap="round" />
<path d="M944.5 158C950 163 955 175 955.5 186C955.6 191 954.5 195 952.5 197" fill="none" stroke="#111" stroke-width="0.9" stroke-linejoin="round" stroke-linecap="round" />
<path d="M947.5 199.4C951 200.5 956 197 957.5 191" fill="none" stroke="#111" stroke-width="0.9" stroke-linejoin="round" stroke-linecap="round" />
<path d="M908 173C915 168 925 172 930 184C933.5 193 932.5 203 927.5 210" fill="none" stroke="#111" stroke-width="0.9" stroke-linejoin="round" stroke-linecap="round" />
<path d="M911 170.5C919 166 929 171 934 183C937.5 192 936.5 201 932.5 206.5" fill="none" stroke="#111" stroke-width="0.9" stroke-linejoin="round" stroke-linecap="round" />
<path d="M893.8 184.4L918.8 174.4C924 176 929 184 929.5 192C929.8 199 926 204.5 917.5 206.3L905 211.3z" fill="#fff" stroke="#111" stroke-width="1.0" stroke-linejoin="round" stroke-linecap="round" />
<ellipse cx="900" cy="198" rx="10.2" ry="14" fill="#fff" stroke="#111" stroke-width="1.0" transform="rotate(-22 900 198)" />
<ellipse cx="900.3" cy="198" rx="7.2" ry="10.8" fill="#fff" stroke="#111" stroke-width="1.8" transform="rotate(-22 900.3 198)" />
<ellipse cx="900.5" cy="198" rx="4.4" ry="7.2" fill="#fff" stroke="#111" stroke-width="0.8" transform="rotate(-22 900.5 198)" />
<path d="M889.4 198.5L897 195.8L899.6 197.8L899.8 203.5L892 206.5L888.6 204.5z" fill="#fff" stroke="#111" stroke-width="1.0" stroke-linejoin="round" stroke-linecap="round" />
<ellipse cx="889.8" cy="202" rx="1.8" ry="3.6" fill="#fff" stroke="#111" stroke-width="0.9" transform="rotate(-15 889.8 202)" />
<text x="976.3" y="192.8" font-family="'Liberation Sans',sans-serif" font-size="5.2" font-weight="bold" fill="#111" text-anchor="middle">205</text>
<circle cx="1022" cy="140.5" r="6.6" fill="#fff" stroke="#111" stroke-width="0.9"/>
<text x="1022" y="144.2" font-family="'Liberation Sans',sans-serif" font-size="10" font-weight="normal" fill="#111" text-anchor="middle">A</text>
<circle cx="999" cy="238" r="6.6" fill="#fff" stroke="#111" stroke-width="0.9"/>
<text x="999" y="241.8" font-family="'Liberation Sans',sans-serif" font-size="10" font-weight="normal" fill="#111" text-anchor="middle">C</text>
<ellipse cx="1020.8" cy="227" rx="10.3" ry="13.6" fill="#fff" stroke="#111" stroke-width="1.2" transform="rotate(-24 1020.8 227)" />
<ellipse cx="1022" cy="226.6" rx="8.6" ry="12" fill="none" stroke="#111" stroke-width="0.8" transform="rotate(-24 1022 226.6)" />
<path d="M1015.5 221.5L1020.5 218L1026.3 222.5L1026.8 231L1022 235L1016.2 230.5z" fill="#fff" stroke="#111" stroke-width="1.2" stroke-linejoin="round" stroke-linecap="round" />
<path d="M1017.3 222.5L1017.8 229.8L1022 233" fill="none" stroke="#111" stroke-width="0.8" stroke-linejoin="round" stroke-linecap="round" />
<text x="1024.7" y="248.8" font-family="'Liberation Sans',sans-serif" font-size="5.2" font-weight="bold" fill="#111" text-anchor="middle">241</text>
<path d="M1035.5 209L1042 202L1052.5 203L1059 214L1056.5 226L1050 232.5L1040.5 231.5L1034.5 221z" fill="#fff" stroke="#111" stroke-width="1.0" stroke-linejoin="round" stroke-linecap="round" />
<path d="M1042 202L1045.5 204.5L1054.5 205.5L1059 214M1045.5 204.5L1040 211L1039 222L1044 230.5L1050 232.5" fill="none" stroke="#111" stroke-width="0.8" stroke-linejoin="round" stroke-linecap="round" />
<ellipse cx="1045.8" cy="217.5" rx="6.3" ry="9.6" fill="#111" stroke="#111" stroke-width="0.9" transform="rotate(-14 1045.8 217.5)" />
<ellipse cx="1045.2" cy="217.8" rx="3.4" ry="6.3" fill="#fff" stroke="#111" stroke-width="0.4" transform="rotate(-14 1045.2 217.8)" />
<path d="M1043 214l4.5 7M1043 218.5l3 4.5M1044.5 212.5l3.5 5.5" fill="none" stroke="#111" stroke-width="0.8" stroke-linejoin="round" stroke-linecap="round" />
<text x="1050" y="237.8" font-family="'Liberation Sans',sans-serif" font-size="5.2" font-weight="bold" fill="#111" text-anchor="middle">240</text>
<ellipse cx="851.5" cy="275.6" rx="5.7" ry="11.3" fill="none" stroke="#111" stroke-width="1.5" transform="rotate(-12.4 851.5 275.6)" />
<ellipse cx="855.1" cy="274.8" rx="5.7" ry="11.3" fill="none" stroke="#111" stroke-width="1.5" transform="rotate(-12.4 855.1 274.8)" />
<ellipse cx="858.8" cy="274" rx="5.7" ry="11.3" fill="none" stroke="#111" stroke-width="1.5" transform="rotate(-12.4 858.8 274)" />
<ellipse cx="862.4" cy="273.2" rx="5.7" ry="11.3" fill="none" stroke="#111" stroke-width="1.5" transform="rotate(-12.4 862.4 273.2)" />
<ellipse cx="866" cy="272.4" rx="5.7" ry="11.3" fill="none" stroke="#111" stroke-width="1.5" transform="rotate(-12.4 866 272.4)" />
<ellipse cx="858.5" cy="274" rx="2.8" ry="8.4" fill="#111" stroke="#111" stroke-width="0.5" transform="rotate(-12 858.5 274)" />
<text x="859" y="291.3" font-family="'Liberation Sans',sans-serif" font-size="5.2" font-weight="bold" fill="#111" text-anchor="middle">21</text>
<path d="M876.3 262.5C879 256.5 884 254 890 252.5L903 250.5L908.5 271.5L895.5 279.5C887.5 281 878.5 278 876.3 262.5z" fill="#fff" stroke="#111" stroke-width="1.0" stroke-linejoin="round" stroke-linecap="round" />
<path d="M876.3 262.5C876 270 879.5 276.5 887 280" fill="none" stroke="#111" stroke-width="0.9" stroke-linejoin="round" stroke-linecap="round" />
<ellipse cx="898.7" cy="264" rx="9.7" ry="13" fill="#fff" stroke="#111" stroke-width="1.5" transform="rotate(-14 898.7 264)" />
<ellipse cx="901" cy="263.5" rx="6.2" ry="9.6" fill="#fff" stroke="#111" stroke-width="0.9" transform="rotate(-14 901 263.5)" />
<path d="M891.5 256.5l3.5 -3.300l3 1.300M890.5 268l2.5 5l4.5 2.300M905.5 253.5l3 3.5l1 6M908 268.5l-2 5" fill="none" stroke="#111" stroke-width="1.6" stroke-linejoin="round" stroke-linecap="round" />
<path d="M893.5 259l1.5 9" fill="none" stroke="#111" stroke-width="2" stroke-linejoin="round" stroke-linecap="round" />
<path d="M900 263.7L906 262" fill="none" stroke="#111" stroke-width="0.8" stroke-linejoin="round" />
<text x="894.5" y="285.3" font-family="'Liberation Sans',sans-serif" font-size="5.2" font-weight="bold" fill="#111" text-anchor="middle">20</text>
<ellipse cx="926" cy="258.3" rx="10.3" ry="13.2" fill="#fff" stroke="#111" stroke-width="1.5" transform="rotate(-22 926 258.3)" />
<ellipse cx="927" cy="258" rx="8" ry="10.8" fill="#fff" stroke="#111" stroke-width="1.1" transform="rotate(-22 927 258)" />
<ellipse cx="757.9" cy="346.5" rx="10.7" ry="3.6" fill="none" stroke="#111" stroke-width="1.5" />
<ellipse cx="757.9" cy="350.8" rx="10.7" ry="3.6" fill="none" stroke="#111" stroke-width="1.5" />
<ellipse cx="757.9" cy="355.1" rx="10.7" ry="3.6" fill="none" stroke="#111" stroke-width="1.5" />
<ellipse cx="757.9" cy="359.4" rx="10.7" ry="3.6" fill="none" stroke="#111" stroke-width="1.5" />
<ellipse cx="757.9" cy="363.7" rx="10.7" ry="3.6" fill="none" stroke="#111" stroke-width="1.5" />
<ellipse cx="757.9" cy="368" rx="10.7" ry="3.6" fill="none" stroke="#111" stroke-width="1.5" />
<path d="M750 350.5h15M750 359h15M751 367.5h13" fill="none" stroke="#9a9a9a" stroke-width="1.6" stroke-linejoin="round" stroke-linecap="round" />
<text x="773" y="360.4" font-family="'Liberation Sans',sans-serif" font-size="5.2" font-weight="bold" fill="#111" text-anchor="middle">21</text>
<path d="M757.9 334L757.9 346" fill="none" stroke="#111" stroke-width="0.9" stroke-linejoin="round" />
<path d="M745.7 381.4V401C748 404 751 405.5 752.5 405.800V408.5H763.5V405.800C766 405.5 769 404 770.7 401V381.4z" fill="#fff" stroke="#111" stroke-width="1.0" stroke-linejoin="round" stroke-linecap="round" />
<ellipse cx="757.9" cy="381.4" rx="12.3" ry="5.2" fill="#fff" stroke="#111" stroke-width="1.0" />
<path d="M746.5 379.5A12.3 5.2 0 0 1 769.5 379.5" fill="none" stroke="#111" stroke-width="2.0" stroke-linejoin="round" stroke-linecap="round" />
<path d="M748.5 383.800A10 4 0 0 0 767.5 383.8" fill="none" stroke="#111" stroke-width="1.8" stroke-linejoin="round" stroke-linecap="round" />
<path d="M745.7 381.4V388M770.7 381.4V392" fill="none" stroke="#111" stroke-width="1.6" stroke-linejoin="round" stroke-linecap="round" />
<path d="M748 402.5l3 2.300M768 402.5l-3 2.3" fill="none" stroke="#111" stroke-width="1.6" stroke-linejoin="round" stroke-linecap="round" />
<path d="M757.9 370L757.9 383.5" fill="none" stroke="#111" stroke-width="0.9" stroke-linejoin="round" />
<path d="M772 386l1 5.5l3.5 -4h-3.5" fill="none" stroke="#111" stroke-width="0.9" stroke-linejoin="round" stroke-linecap="round" />
<ellipse cx="757.9" cy="420" rx="12.6" ry="5.2" fill="#fff" stroke="#111" stroke-width="1.1" />
<path d="M745.3 420V424A12.6 5.2 0 0 0 770.5 424V420" fill="none" stroke="#111" stroke-width="1.1" stroke-linejoin="round" stroke-linecap="round" />
<path d="M747.5 421.5A10.4 4 0 0 0 768.3 421.5" fill="none" stroke="#111" stroke-width="0.8" stroke-linejoin="round" stroke-linecap="round" />
<path d="M757.9 408.5L757.9 419" fill="none" stroke="#111" stroke-width="0.9" stroke-linejoin="round" />
<path d="M815 333L824.5 345L828 342.300L818.5 330.5z" fill="#111" stroke="#111" stroke-width="0.9" stroke-linejoin="round" stroke-linecap="round" />
<path d="M823.5 347.5L829 342.5L834.5 345.5L835.5 350.5L830.5 355.5L825 353z" fill="#fff" stroke="#111" stroke-width="1.2" stroke-linejoin="round" stroke-linecap="round" />
<path d="M827.5 352.5L833 347.5L836.5 349.5L834 355L829.5 357z" fill="#111" stroke="#111" stroke-width="0.9" stroke-linejoin="round" stroke-linecap="round" />
<path d="M826 346.5l4.5 6" fill="none" stroke="#111" stroke-width="0.8" stroke-linejoin="round" stroke-linecap="round" />
<text x="838" y="340.4" font-family="'Liberation Sans',sans-serif" font-size="5.2" font-weight="bold" fill="#111" text-anchor="middle">301</text>
<ellipse cx="839.3" cy="362.9" rx="9.3" ry="4" fill="#fff" stroke="#111" stroke-width="1.2" transform="rotate(-42 839.3 362.9)" />
<ellipse cx="839.3" cy="362.9" rx="7" ry="2.3" fill="#fff" stroke="#111" stroke-width="0.8" transform="rotate(-42 839.3 362.9)" />
<path d="M835.5 358.5L843 367.5" fill="none" stroke="#111" stroke-width="0.8" stroke-linejoin="round" />
<text x="851.4" y="353.9" font-family="'Liberation Sans',sans-serif" font-size="5.2" font-weight="bold" fill="#111" text-anchor="middle">301</text>
<path d="M841 374.5L852.5 366L860.5 371.5L861.5 378L850.5 386.5L842.5 382z" fill="#111" stroke="#111" stroke-width="0.9" stroke-linejoin="round" stroke-linecap="round" />
<ellipse cx="852" cy="373.3" rx="7.8" ry="3.5" fill="none" stroke="#fff" stroke-width="0.8" transform="rotate(-36 852 373.3)" />
<path d="M845 378l3 3.5M849 375l4 5M853.5 372l3.5 4.5M847.5 383l10 -7.5" fill="none" stroke="#fff" stroke-width="0.8" stroke-linejoin="round" stroke-linecap="round" />
<text x="862.1" y="366.8" font-family="'Liberation Sans',sans-serif" font-size="5.2" font-weight="bold" fill="#111" text-anchor="middle">301</text>
<path d="M709 344.3L724.5 336.2L726.6 340.6L711 349z" fill="#fff" stroke="#111" stroke-width="1.0" stroke-linejoin="round" stroke-linecap="round" />
<path d="M717.5 339.8L724.5 336.2L726.6 340.6L719.5 344.6z" fill="#222" stroke="#111" stroke-width="0.8" stroke-linejoin="round" stroke-linecap="round" />
<path d="M719.5 339.5l1.6 4M722 338.3l1.6 4M724.3 337l1.5 3.8" fill="none" stroke="#fff" stroke-width="0.6" stroke-linejoin="round" stroke-linecap="round" />
<path d="M726.5 336l1.5 3.8" fill="none" stroke="#111" stroke-width="1.4" stroke-linejoin="round" stroke-linecap="round" />
<path d="M701 343.5L706.5 341L713 355L707 358.5z" fill="#111" stroke="#111" stroke-width="0.9" stroke-linejoin="round" stroke-linecap="round" />
<ellipse cx="709.8" cy="348" rx="3.3" ry="7.6" fill="#111" stroke="#111" stroke-width="0.9" transform="rotate(-24 709.8 348)" />
<path d="M704 344.5l5.5 12" fill="none" stroke="#fff" stroke-width="0.6" stroke-linejoin="round" stroke-linecap="round" />
<path d="M693.5 347L702 343L708 357L699.5 361.5z" fill="#fff" stroke="#111" stroke-width="1.0" stroke-linejoin="round" stroke-linecap="round" />
<path d="M683.5 352L694 347L700.3 361.3L689 367z" fill="#111" stroke="#111" stroke-width="0.9" stroke-linejoin="round" stroke-linecap="round" />
<path d="M689.5 350l5.5 13.5M686.5 352.5l1 3M692.5 360l1.5 3.5M690 356l1 1" fill="none" stroke="#fff" stroke-width="0.7" stroke-linejoin="round" stroke-linecap="round" />
<path d="M678 354.5L684 351.5L689.5 366L683.5 368.5z" fill="#fff" stroke="#111" stroke-width="1.0" stroke-linejoin="round" stroke-linecap="round" />
<ellipse cx="681.3" cy="360.2" rx="4.6" ry="7.4" fill="#fff" stroke="#111" stroke-width="1.3" transform="rotate(-22 681.3 360.2)" />
<ellipse cx="681.3" cy="360.2" rx="2.8" ry="5" fill="#111" stroke="#111" stroke-width="0.9" transform="rotate(-22 681.3 360.2)" />
<ellipse cx="681" cy="360.2" rx="1.2" ry="2.4" fill="#fff" stroke="#111" stroke-width="0.3" transform="rotate(-22 681 360.2)" />
<text x="702" y="369.7" font-family="'Liberation Sans',sans-serif" font-size="5.2" font-weight="bold" fill="#111" text-anchor="middle">305</text>
<path d="M734.3 332.600l2.6 2.400l-2.6 2.400l-2.6 -2.400z" fill="#fff" stroke="#111" stroke-width="0.8" stroke-linejoin="round" stroke-linecap="round" />
<text x="734.3" y="343.9" font-family="'Liberation Sans',sans-serif" font-size="5.2" font-weight="bold" fill="#111" text-anchor="middle">305</text>
<path d="M647.5 368.5L663.5 360.5C669 359.5 673.5 363.5 673.5 369.5C673.5 373 672.5 375 671 376.5" fill="none" stroke="#111" stroke-width="1.0" stroke-linejoin="round" stroke-linecap="round" />
<path d="M655.5 364.5C659 366 661.5 371.5 661.5 377" fill="none" stroke="#111" stroke-width="0.9" stroke-linejoin="round" stroke-linecap="round" />
<path d="M647.5 368.5C644 371 643.5 377 646 381.5" fill="none" stroke="#111" stroke-width="1.0" stroke-linejoin="round" stroke-linecap="round" />
<path d="M647 371.5L653 375.5L651 379" fill="none" stroke="#111" stroke-width="1.2" stroke-linejoin="round" stroke-linecap="round" />
<path d="M656 379.5l3 -1.5" fill="none" stroke="#111" stroke-width="1.1" stroke-linejoin="round" stroke-linecap="round" />
<text x="664" y="384.7" font-family="'Liberation Sans',sans-serif" font-size="5.2" font-weight="bold" fill="#111" text-anchor="middle">5/2</text>
<path d="M623.6 363.4L634.5 361A4.7 7.6 -12.4 0 0 631.3 346.2L620.4 348.6A4.7 7.6 -12.4 0 0 623.6 363.4z" fill="#fff" stroke="#111" stroke-width="1.0" stroke-linejoin="round"/>
<ellipse cx="632.9" cy="353.6" rx="4.7" ry="7.6" fill="#fff" stroke="#111" stroke-width="1.0" transform="rotate(-12.4 632.9 353.6)" />
<ellipse cx="632.9" cy="353.6" rx="4.7" ry="7.6" fill="#fff" stroke="#111" stroke-width="1.4" transform="rotate(-12 632.9 353.6)" />
<text x="630.7" y="367.5" font-family="'Liberation Sans',sans-serif" font-size="5.2" font-weight="bold" fill="#111" text-anchor="middle">5/9</text>
<path d="M621 383.5C618.5 387 619 393 622 396.5" fill="none" stroke="#111" stroke-width="1.0" stroke-linejoin="round" stroke-linecap="round" />
<path d="M625.5 396.800l9 -1.3" fill="none" stroke="#111" stroke-width="1.0" stroke-linejoin="round" stroke-linecap="round" />
<path d="M629 384C626.5 388.5 628 393 630.5 395" fill="none" stroke="#111" stroke-width="1.4" stroke-linejoin="round" stroke-linecap="round" />
<path d="M630 382.5C636 381 640.5 386 640 392" fill="none" stroke="#111" stroke-width="1.0" stroke-linejoin="round" stroke-linecap="round" />
<text x="633.6" y="402.2" font-family="'Liberation Sans',sans-serif" font-size="5.2" font-weight="bold" fill="#111" text-anchor="middle">5/9</text>
<path d="M509.3 435.6L534.8 424.6L537 429.4L511.5 441z" fill="#111" stroke="#111" stroke-width="0.9" stroke-linejoin="round" stroke-linecap="round" />
<path d="M515 434.5l0.5 0.800M520 432.5l0.5 0.800M525 430.5l0.5 0.800M530 428.5l0.5 0.8" fill="none" stroke="#fff" stroke-width="0.7" stroke-linejoin="round" stroke-linecap="round" />
<path d="M500.5 437.5L504 434L509.5 435L511 441.5L507.5 446L502 445z" fill="#111" stroke="#111" stroke-width="0.9" stroke-linejoin="round" stroke-linecap="round" />
<ellipse cx="503.8" cy="440.5" rx="2.6" ry="3.8" fill="none" stroke="#fff" stroke-width="0.8" transform="rotate(-20 503.8 440.5)" />
<text x="528.6" y="441.1" font-family="'Liberation Sans',sans-serif" font-size="5.2" font-weight="bold" fill="#111" text-anchor="middle">410</text>
<ellipse cx="649.8" cy="455.5" rx="23.6" ry="33.4" fill="#fff" stroke="#111" stroke-width="1.0" transform="rotate(-18 649.8 455.5)" />
<ellipse cx="649.8" cy="455.5" rx="21.7" ry="31.5" fill="#fff" stroke="#111" stroke-width="1.0" transform="rotate(-18 649.8 455.5)" />
<path d="M626 467L650 455.3" fill="none" stroke="#111" stroke-width="0.9" stroke-linejoin="round" />
<text x="659.5" y="493.3" font-family="'Liberation Sans',sans-serif" font-size="5.2" font-weight="bold" fill="#111" text-anchor="middle">55</text>
<ellipse cx="607.1" cy="475" rx="18" ry="26.8" fill="#fff" stroke="#111" stroke-width="1.0" transform="rotate(-20 607.1 475)" />
<ellipse cx="607.1" cy="475" rx="16.2" ry="25" fill="#fff" stroke="#111" stroke-width="1.0" transform="rotate(-20 607.1 475)" />
<path d="M586 485L607 474.5" fill="none" stroke="#111" stroke-width="0.9" stroke-linejoin="round" />
<text x="617" y="506.5" font-family="'Liberation Sans',sans-serif" font-size="5.2" font-weight="bold" fill="#111" text-anchor="middle">120</text>
<ellipse cx="569.3" cy="492.1" rx="15.3" ry="22" fill="#fff" stroke="#111" stroke-width="1.15" transform="rotate(-20 569.3 492.1)" />
<ellipse cx="570" cy="491.8" rx="12.6" ry="19" fill="#fff" stroke="#111" stroke-width="1.0" transform="rotate(-20 570 491.8)" />
<path d="M556 472.5l2 -2.5l3 0.5M585.5 498.5l2.8 1l-0.5 3.5M580.5 512.5l1 2.5l-2.5 0.5" fill="none" stroke="#111" stroke-width="1.3" stroke-linejoin="round" stroke-linecap="round" />
<path d="M552 500.5L571 492" fill="none" stroke="#111" stroke-width="0.9" stroke-linejoin="round" />
<text x="580.7" y="520.8" font-family="'Liberation Sans',sans-serif" font-size="5.2" font-weight="bold" fill="#111" text-anchor="middle">214</text>
<ellipse cx="535.7" cy="507.9" rx="15.8" ry="21.6" fill="#fff" stroke="#111" stroke-width="1.15" transform="rotate(-20 535.7 507.9)" />
<ellipse cx="536.5" cy="507.5" rx="12.8" ry="18.4" fill="#fff" stroke="#111" stroke-width="1.0" transform="rotate(-20 536.5 507.5)" />
<path d="M520.5 495l-2 2.5l1.5 3M521 513.5l-1 3l2.5 2M530.5 526.5l1.5 2.5l3 -0.5M551 509l2.5 2l-0.8 3.5M541 489.5l3 -0.5l1.5 2" fill="none" stroke="#111" stroke-width="1.3" stroke-linejoin="round" stroke-linecap="round" />
<path d="M524 500l2.5 11M546 497l3 12" fill="none" stroke="#111" stroke-width="0.7" stroke-linejoin="round" stroke-linecap="round" stroke-dasharray="1.5 1.5"/>
<path d="M517.5 516L536 507.5" fill="none" stroke="#111" stroke-width="0.9" stroke-linejoin="round" />
<text x="537" y="535.8" font-family="'Liberation Sans',sans-serif" font-size="5.2" font-weight="bold" fill="#111" text-anchor="middle">215</text>
<ellipse cx="684.4" cy="439.5" rx="12.6" ry="16.6" fill="#fff" stroke="#e0101c" stroke-width="1.1" transform="rotate(-22 684.4 439.5)" />
<ellipse cx="684.8" cy="439.5" rx="10.4" ry="14.2" fill="#fff" stroke="#e0101c" stroke-width="0.9" transform="rotate(-22 684.8 439.5)" />
<path d="M673.5 428.5l-2.5 1l1 4M694.5 440l3.5 1.5l-1 3l-3 0.5M690 453l-0.5 2.5l-3 -0.5" fill="none" stroke="#e0101c" stroke-width="1.3" stroke-linejoin="round" stroke-linecap="round" />
<path d="M672 445.5L684.5 439.3" fill="none" stroke="#111" stroke-width="0.9" stroke-linejoin="round" />
<circle cx="695" cy="463.6" r="5" fill="#fff" stroke="#e0101c" stroke-width="1.0"/>
<text x="695" y="465.2" font-family="'Liberation Sans',sans-serif" font-size="4.4" font-weight="bold" fill="#e0101c" text-anchor="middle">212</text>
<circle cx="511.4" cy="519.3" r="6.6" fill="#fff" stroke="#111" stroke-width="0.9"/>
<text x="511.4" y="523" font-family="'Liberation Sans',sans-serif" font-size="10" font-weight="normal" fill="#111" text-anchor="middle">A</text>
<circle cx="707.5" cy="427.5" r="6.6" fill="#fff" stroke="#111" stroke-width="0.9"/>
<text x="707.5" y="431.2" font-family="'Liberation Sans',sans-serif" font-size="10" font-weight="normal" fill="#111" text-anchor="middle">B</text>
<circle cx="845" cy="418.4" r="6.6" fill="#fff" stroke="#111" stroke-width="0.9"/>
<text x="845" y="422.1" font-family="'Liberation Sans',sans-serif" font-size="10" font-weight="normal" fill="#111" text-anchor="middle">B</text>
<circle cx="497.2" cy="539.5" r="0.9" fill="#111" stroke="#111" stroke-width="0.3"/>
<circle cx="1112.3" cy="113" r="1" fill="#111" stroke="#111" stroke-width="0.3"/>
<path d="M510.7 382.1L516.4 375L530 367L542.1 360.7L556.4 354.3L563.6 356.4L573.6 353.6L586.4 352.8L590 356L595 355.5L606 353.5L610 357L609 363L597 366.5L593 373L588.5 377L590 384L598 390L609 390.5L612 394.5L609.5 399L597 402.5L592 410.5L580 414.5L570.7 416.4L562.1 419.3L553.6 423.6L547 427.5L540 426L536.4 419.3L535 412.1L527.9 402.1L522.1 397.9L513.6 392.1z" fill="#fff" stroke="#e0101c" stroke-width="1.2" stroke-linejoin="round" stroke-linecap="round" />
<path d="M573.6 353.6L584.5 351.800L589.5 372.5L579.5 377z" fill="#e0101c" stroke="#e0101c" stroke-width="1.0" stroke-linejoin="round" stroke-linecap="round" />
<path d="M577 395.5L588 392L592.5 409L582.5 413.5z" fill="#e0101c" stroke="#e0101c" stroke-width="1.0" stroke-linejoin="round" stroke-linecap="round" />
<path d="M575 357.5l10 -2.5M576 361.5l10 -2.5M577 365.5l10 -2.5M578 369.5l10 -2.5M579 373.5l9 -2.5M579 399l10 -3M580 403l10 -3M581 407l10 -3M582 410.5l9 -3" fill="none" stroke="#f58a90" stroke-width="0.6" stroke-linejoin="round" stroke-linecap="round" />
<path d="M563.6 356.4L573.6 353.6L579.5 377L571 379.5z" fill="#f6b6ba" stroke="#e0101c" stroke-width="1.0" stroke-linejoin="round" stroke-linecap="round" />
<path d="M566 395.5L577 395.5L582.5 413.5L573 416.5z" fill="#f6b6ba" stroke="#e0101c" stroke-width="1.0" stroke-linejoin="round" stroke-linecap="round" />
<path d="M566.5 357l5.5 21M569.5 356l5.5 21M569 397l4.5 18M572 396.5l5 18" fill="none" stroke="#e0101c" stroke-width="0.9" stroke-linejoin="round" stroke-linecap="round" />
<path d="M586.4 355.5L595 354L598 366L590 369z" fill="#fff" stroke="#e0101c" stroke-width="1.1" stroke-linejoin="round" stroke-linecap="round" />
<path d="M589 355l3 13M592 354.5l3 12.5" fill="none" stroke="#e0101c" stroke-width="1.3" stroke-linejoin="round" stroke-linecap="round" />
<path d="M595 355.5L606 353.5L608 361.5L597.5 364.5z" fill="#fff" stroke="#e0101c" stroke-width="1.1" stroke-linejoin="round" stroke-linecap="round" />
<ellipse cx="605.8" cy="358.6" rx="2.6" ry="4.2" fill="#fff" stroke="#e0101c" stroke-width="1.5" transform="rotate(-14 605.8 358.6)" />
<path d="M589.5 394L597 392L600 404L592.5 406.5z" fill="#fff" stroke="#e0101c" stroke-width="1.1" stroke-linejoin="round" stroke-linecap="round" />
<path d="M592 393.5l3 12M594.5 393l3 11.5" fill="none" stroke="#e0101c" stroke-width="1.3" stroke-linejoin="round" stroke-linecap="round" />
<path d="M597 392.5L608.5 390.300L610.5 397.5L599.5 400.5z" fill="#fff" stroke="#e0101c" stroke-width="1.1" stroke-linejoin="round" stroke-linecap="round" />
<ellipse cx="609.3" cy="394.3" rx="2.5" ry="4" fill="#fff" stroke="#e0101c" stroke-width="1.5" transform="rotate(-14 609.3 394.3)" />
<path d="M516.4 375L526 384L533 395L538 408L540 420M530 367L540 377L546 390L549 402M542.1 360.7L550 371L556 384L563 394L568 406" fill="none" stroke="#e0101c" stroke-width="1.0" stroke-linejoin="round" stroke-linecap="round" />
<path d="M550 371L559 366.5L566 372L566 382L556 384M540 377L550 371M510.7 382.1L519 387.5L524 397M526 384L519 387.5" fill="none" stroke="#e0101c" stroke-width="1.0" stroke-linejoin="round" stroke-linecap="round" />
<path d="M546 403L548 415L553.6 423.6M549 402L560 400L563 394M560 400L564 411L570.7 416.4M535 412.1L546 403" fill="none" stroke="#e0101c" stroke-width="1.0" stroke-linejoin="round" stroke-linecap="round" />
<path d="M553 391l8 -2.5M545 383l8 -3.5M562 378l5 -2M556.5 360l4 6M548 364l4 5M533 372l4 5M523 379l4 5" fill="none" stroke="#e0101c" stroke-width="1.0" stroke-linejoin="round" stroke-linecap="round" />
<path d="M552 376C554 372 558 371 561 373.5C563 376 562 380 559 382" fill="none" stroke="#e0101c" stroke-width="1.2" stroke-linejoin="round" stroke-linecap="round" />
<path d="M556 405C559 403 563 404 565 407M542 392C544 389 548 389 550 392M529 390l5 9M522 391l3 5" fill="none" stroke="#e0101c" stroke-width="1.1" stroke-linejoin="round" stroke-linecap="round" />
<path d="M571 381l8 -2.5l2 8l8 -1M572 388l7 -2M574 392l6 -1.5" fill="none" stroke="#e0101c" stroke-width="1.0" stroke-linejoin="round" stroke-linecap="round" />
<ellipse cx="537.1" cy="375" rx="3.8" ry="6" fill="#fff" stroke="#e0101c" stroke-width="1.7" transform="rotate(-20 537.1 375)" />
<ellipse cx="537.1" cy="375" rx="1.5" ry="2.6" fill="#fff" stroke="#e0101c" stroke-width="0.9" transform="rotate(-20 537.1 375)" />
<ellipse cx="516.5" cy="384.5" rx="2.5" ry="4.2" fill="#fff" stroke="#e0101c" stroke-width="1.0" transform="rotate(-20 516.5 384.5)" />
<path d="M517 379l3 -2M514 389l4 6" fill="none" stroke="#e0101c" stroke-width="1.0" stroke-linejoin="round" stroke-linecap="round" />
<path d="M531 380l6 10M536 396l8 -3M541 400l5 9M552 408l7 -3M556 412l6 6M524 386l6 7M545 367l5 8M560 361l2 8M567 381l3 9M583 378l5 -1.5M584 381.5l6 -1.5M577 417l8 -3M586 388l6 3M599 368l6 -2M600 404l6 -2" fill="none" stroke="#e0101c" stroke-width="1.1" stroke-linejoin="round" stroke-linecap="round" />
<path d="M540 414C543 410 548 410 551 413M527 376C530 373 534 374 535 378M558 392C561 389 566 390 567 394" fill="none" stroke="#e0101c" stroke-width="1.2" stroke-linejoin="round" stroke-linecap="round" />
<path d="M509 381.5C526 383.5 546 385 562 386.5C578 388 592 388 606 386.5" fill="none" stroke="#fff" stroke-width="5.6" stroke-linejoin="round" stroke-linecap="round" />
<path d="M552 392.5C562 394 570 394 578 393" fill="none" stroke="#fff" stroke-width="2.4" stroke-linejoin="round" stroke-linecap="round" />
<path d="M520 376l30 6" fill="none" stroke="#fff" stroke-width="2" stroke-linejoin="round" stroke-linecap="round" />
<path d="M543.3 430.2L550.7 426.9A4.8 6.8 -24 0 0 545.1 414.5L537.7 417.8A4.8 6.8 -24 0 0 543.3 430.2z" fill="#fff" stroke="#e0101c" stroke-width="1.2" stroke-linejoin="round"/>
<ellipse cx="547.9" cy="420.7" rx="4.8" ry="6.8" fill="#fff" stroke="#e0101c" stroke-width="1.2" transform="rotate(-24 547.9 420.7)" />
<ellipse cx="547.9" cy="420.7" rx="2.3" ry="3.5" fill="#fff" stroke="#e0101c" stroke-width="1.0" transform="rotate(-22 547.9 420.7)" />
<circle cx="573.3" cy="425.3" r="5.3" fill="#fff" stroke="#e0101c" stroke-width="1.0"/>
<text x="573.3" y="427" font-family="'Liberation Sans',sans-serif" font-size="4.4" font-weight="bold" fill="#e0101c" text-anchor="middle">400</text>
<path d="M947.1 330L960 324.3L978.6 317.9L988.6 325L1029.1 345.6L1037.2 365.4L1047.8 414.5L1044.3 430.8L1030.2 451.9L1015 461.2L1011.4 462.9L998.6 461.4L988.6 452.9L981.4 449.3L968.6 452.9L961.4 450.7L954.3 441.4L947.1 433.6L934.3 428.6L921.4 423L912.1 402.9L913.6 392.9L930 374.3L927.1 367.1L927.1 355.7L937.1 344.3L945.7 337.1z" fill="#fff" stroke="#e0101c" stroke-width="1.0" stroke-linejoin="round" stroke-linecap="round" />
<path d="M947.1 330L958 336.5L972.9 332.9L1011.4 354.3L1029.1 345.6M972.9 332.9L960 324.3M958 336.5L966 345" fill="none" stroke="#e0101c" stroke-width="1.0" stroke-linejoin="round" stroke-linecap="round" />
<path d="M970 328.5L986 320.5" fill="none" stroke="#e0101c" stroke-width="0.9" stroke-linejoin="round" stroke-linecap="round" />
<path d="M1011.4 354.3L1012.7 356.1L1023.2 393.5L1030.2 421.5L1030.7 427.1L1028.6 445.7L1017.1 455.7L1011.4 462.9" fill="none" stroke="#e0101c" stroke-width="1.0" stroke-linejoin="round" stroke-linecap="round" />
<path d="M966 345L958 352L952 362" fill="none" stroke="#e0101c" stroke-width="0.9" stroke-linejoin="round" stroke-linecap="round" />
<path d="M937.1 344.3L944 350L946 362L938 372L930 374.3" fill="none" stroke="#e0101c" stroke-width="0.9" stroke-linejoin="round" stroke-linecap="round" />
<ellipse cx="968.6" cy="325.7" rx="4" ry="2.3" fill="#e0101c" stroke="#e0101c" stroke-width="0.6" transform="rotate(-10 968.6 325.7)" />
<ellipse cx="985.7" cy="337.1" rx="3.4" ry="1.9" fill="#fff" stroke="#e0101c" stroke-width="1.2" transform="rotate(25 985.7 337.1)" />
<ellipse cx="994.3" cy="340.3" rx="3.4" ry="1.9" fill="#fff" stroke="#e0101c" stroke-width="1.2" transform="rotate(25 994.3 340.3)" />
<ellipse cx="1011.4" cy="344.3" rx="8" ry="4.4" fill="#fff" stroke="#e0101c" stroke-width="1.1" transform="rotate(8 1011.4 344.3)" />
<ellipse cx="1011.4" cy="344.3" rx="4.8" ry="2.4" fill="#fff" stroke="#e0101c" stroke-width="1.6" transform="rotate(8 1011.4 344.3)" />
<ellipse cx="953.6" cy="340" rx="2" ry="3" fill="#fff" stroke="#e0101c" stroke-width="0.9" transform="rotate(-20 953.6 340)" />
<ellipse cx="965" cy="337.1" rx="1.2" ry="1.8" fill="#fff" stroke="#e0101c" stroke-width="0.9" transform="rotate(-20 965 337.1)" />
<ellipse cx="974.3" cy="347.1" rx="2.2" ry="3.2" fill="#fff" stroke="#e0101c" stroke-width="0.9" transform="rotate(-20 974.3 347.1)" />
<ellipse cx="950" cy="356.4" rx="2" ry="3.2" fill="#fff" stroke="#e0101c" stroke-width="0.9" transform="rotate(-20 950 356.4)" />
<ellipse cx="935" cy="364.3" rx="3" ry="5" fill="#fff" stroke="#e0101c" stroke-width="0.9" transform="rotate(-20 935 364.3)" />
<ellipse cx="978.6" cy="359.3" rx="1.2" ry="1.8" fill="#fff" stroke="#e0101c" stroke-width="0.9" transform="rotate(-20 978.6 359.3)" />
<ellipse cx="994.3" cy="391.4" rx="3" ry="4.2" fill="#fff" stroke="#e0101c" stroke-width="0.9" transform="rotate(-20 994.3 391.4)" />
<ellipse cx="1020" cy="400" rx="2.2" ry="3.2" fill="#fff" stroke="#e0101c" stroke-width="0.9" transform="rotate(-20 1020 400)" />
<ellipse cx="1002.1" cy="410" rx="2.2" ry="3.4" fill="#fff" stroke="#e0101c" stroke-width="0.9" transform="rotate(-20 1002.1 410)" />
<ellipse cx="1005" cy="432.9" rx="2.2" ry="3.4" fill="#fff" stroke="#e0101c" stroke-width="0.9" transform="rotate(-20 1005 432.9)" />
<ellipse cx="1020" cy="435.7" rx="2" ry="3" fill="#fff" stroke="#e0101c" stroke-width="0.9" transform="rotate(-20 1020 435.7)" />
<ellipse cx="964.3" cy="441.4" rx="3.5" ry="5" fill="#fff" stroke="#e0101c" stroke-width="0.9" transform="rotate(-20 964.3 441.4)" />
<ellipse cx="924.3" cy="395" rx="3" ry="4" fill="#fff" stroke="#e0101c" stroke-width="0.9" transform="rotate(-20 924.3 395)" />
<ellipse cx="931.4" cy="422.1" rx="2.6" ry="3.8" fill="#fff" stroke="#e0101c" stroke-width="0.9" transform="rotate(-20 931.4 422.1)" />
<ellipse cx="997.1" cy="452.9" rx="2.4" ry="3.4" fill="#fff" stroke="#e0101c" stroke-width="0.9" transform="rotate(-20 997.1 452.9)" />
<circle cx="921.4" cy="410" r="1.2" fill="#e0101c" stroke="#e0101c" stroke-width="0.5"/>
<circle cx="1007.9" cy="451.6" r="1.2" fill="#e0101c" stroke="#e0101c" stroke-width="0.5"/>
<ellipse cx="965.7" cy="400.7" rx="25" ry="35" fill="#fff" stroke="#e0101c" stroke-width="1.3" transform="rotate(-22 965.7 400.7)" />
<ellipse cx="966.4" cy="400.4" rx="23" ry="32.5" fill="#fff" stroke="#e0101c" stroke-width="0.9" transform="rotate(-22 966.4 400.4)" />
<ellipse cx="967.1" cy="399.9" rx="20.5" ry="29" fill="#fff" stroke="#e0101c" stroke-width="0.9" transform="rotate(-22 967.1 399.9)" />
<ellipse cx="967.5" cy="399.5" rx="17.5" ry="25.5" fill="#fff" stroke="#e0101c" stroke-width="1.3" transform="rotate(-22 967.5 399.5)" />
<ellipse cx="966.7" cy="398.7" rx="14" ry="20.5" fill="#fff" stroke="#e0101c" stroke-width="0.9" transform="rotate(-22 966.7 398.7)" />
<ellipse cx="964.5" cy="397" rx="10.2" ry="16" fill="#fff" stroke="#e0101c" stroke-width="1.6" transform="rotate(-22 964.5 397)" />
<path d="M975 374l3.5 4l-2 3M984 395l3.5 1l0.5 4M978.5 416l1 3.5l-3 2M950 402l-3 2l1.5 4M954.5 380l-2 -3l2.5 -2.5" fill="none" stroke="#e0101c" stroke-width="1.2" stroke-linejoin="round" stroke-linecap="round" />
<path d="M955 405.5l4 3l-1 4M972 409l4 -1.5l2.5 2.5" fill="none" stroke="#e0101c" stroke-width="1.4" stroke-linejoin="round" stroke-linecap="round" />
<circle cx="954.5" cy="408.5" r="1.6" fill="#e0101c" stroke="#e0101c" stroke-width="0.5"/>
<path d="M983.5 381C988 388 990 398 989 408C988 415 985.5 421 982 425" fill="none" stroke="#e0101c" stroke-width="2.0" stroke-linejoin="round" stroke-linecap="round" />
<ellipse cx="1010" cy="381.4" rx="7.6" ry="9.6" fill="#fff" stroke="#e0101c" stroke-width="0.9" transform="rotate(-20 1010 381.4)" />
<ellipse cx="1010" cy="381.4" rx="4.6" ry="5.4" fill="#e0101c" stroke="#e0101c" stroke-width="0.6" transform="rotate(-20 1010 381.4)" />
<ellipse cx="1031.2" cy="382.3" rx="2.8" ry="4.2" fill="#fff" stroke="#e0101c" stroke-width="0.9" transform="rotate(-15 1031.2 382.3)" />
<ellipse cx="1031.2" cy="382.3" rx="1.5" ry="2.6" fill="#e0101c" stroke="#e0101c" stroke-width="0.5" transform="rotate(-15 1031.2 382.3)" />
<ellipse cx="1041.5" cy="416.5" rx="2.8" ry="4.2" fill="#fff" stroke="#e0101c" stroke-width="0.9" transform="rotate(-15 1041.5 416.5)" />
<ellipse cx="1041.5" cy="416.5" rx="1.5" ry="2.6" fill="#e0101c" stroke="#e0101c" stroke-width="0.5" transform="rotate(-15 1041.5 416.5)" />
<ellipse cx="1017.1" cy="417.1" rx="6" ry="8.6" fill="#fff" stroke="#e0101c" stroke-width="1.0" transform="rotate(-20 1017.1 417.1)" />
<ellipse cx="1017.6" cy="417" rx="4.4" ry="6.6" fill="#fff" stroke="#e0101c" stroke-width="0.9" transform="rotate(-20 1017.6 417)" />
<path d="M1011 459l4.5 -4.5M1013 460.5l4 -4M1009.5 457l3 -3" fill="none" stroke="#e0101c" stroke-width="1.2" stroke-linejoin="round" stroke-linecap="round" />
<circle cx="1038" cy="455.8" r="5.4" fill="#fff" stroke="#e0101c" stroke-width="1.0"/>
<text x="1038" y="457.5" font-family="'Liberation Sans',sans-serif" font-size="4.4" font-weight="bold" fill="#e0101c" text-anchor="middle">100</text>
<path d="M915.5 425.7L1010 381.4" fill="none" stroke="#111" stroke-width="0.9" stroke-linejoin="round" />
<path d="M944.3 409.3L965.7 398.6" fill="none" stroke="#111" stroke-width="0.9" stroke-linejoin="round" />
<path d="M914.3 390L978.6 359.3" fill="none" stroke="#111" stroke-width="0.9" stroke-linejoin="round" />
<path d="M917.5 372L950 356.4" fill="none" stroke="#111" stroke-width="0.9" stroke-linejoin="round" />
<path d="M923 356.3L965 337.1" fill="none" stroke="#111" stroke-width="0.9" stroke-linejoin="round" />
<path d="M893 495L1019.3 436.4" fill="none" stroke="#111" stroke-width="0.9" stroke-linejoin="round" />
<path d="M986.5 462L1007.9 451.6" fill="none" stroke="#111" stroke-width="0.9" stroke-linejoin="round" />
<path d="M903 406.5L943 410" fill="none" stroke="#111" stroke-width="0.9" stroke-linejoin="round" />
<path d="M904.3 419.3L921.4 410" fill="none" stroke="#111" stroke-width="0.9" stroke-linejoin="round" />
<path d="M1004.5 287L1007 282.5L1016.5 282.5L1019.3 287V299.5H1004.5z" fill="#fff" stroke="#e0101c" stroke-width="1.3" stroke-linejoin="round" stroke-linecap="round" />
<path d="M1004.5 287L1007 282.5L1016.5 282.5L1019.3 287V290.5H1004.5z" fill="#f2767c" stroke="#e0101c" stroke-width="1.2" stroke-linejoin="round" stroke-linecap="round" />
<path d="M1008.5 285.6h7" fill="none" stroke="#fff" stroke-width="1.3" stroke-linejoin="round" stroke-linecap="round" />
<rect x="1007.3" y="291.6" width="8.6" height="5.2" fill="#fff" stroke="#e0101c" stroke-width="1.4"/>
<path d="M1005.2 290.5V299.5M1018.6 290.5V299.5" fill="none" stroke="#e0101c" stroke-width="1.8" stroke-linejoin="round" stroke-linecap="round" />
<path d="M1005.5 299.5H1018.5V311L1016.5 314H1007.5L1005.5 311z" fill="#e0101c" stroke="#e0101c" stroke-width="0.8" stroke-linejoin="round" stroke-linecap="round" />
<path d="M1008.5 303.5l3 1.5l3 -1.5M1008.5 308.5l3 1l3 -1" fill="none" stroke="#f8a0a4" stroke-width="0.9" stroke-linejoin="round" stroke-linecap="round" />
<rect x="1007.8" y="314" width="8.6" height="5.4" rx="1" fill="#fff" stroke="#e0101c" stroke-width="1.0"/>
<circle cx="1027.1" cy="301.4" r="5.4" fill="#fff" stroke="#e0101c" stroke-width="1.0"/>
<text x="1027.1" y="303.1" font-family="'Liberation Sans',sans-serif" font-size="4.4" font-weight="bold" fill="#e0101c" text-anchor="middle">170</text>
<ellipse cx="1064.1" cy="353.3" rx="15.3" ry="21.9" fill="#fff" stroke="#111" stroke-width="1.1" transform="rotate(-20 1064.1 353.3)" />
<ellipse cx="1064.1" cy="353.3" rx="13.6" ry="20.2" fill="#fff" stroke="#111" stroke-width="1.0" transform="rotate(-20 1064.1 353.3)" />
<path d="M1048 360.3L1064 353.3" fill="none" stroke="#111" stroke-width="0.9" stroke-linejoin="round" />
<text x="1082.3" y="376.6" font-family="'Liberation Sans',sans-serif" font-size="5.2" font-weight="bold" fill="#111" text-anchor="middle">140</text>
<circle cx="1093.8" cy="339.3" r="6.6" fill="#fff" stroke="#111" stroke-width="0.9"/>
<text x="1093.8" y="343" font-family="'Liberation Sans',sans-serif" font-size="10" font-weight="normal" fill="#111" text-anchor="middle">C</text>
<path d="M1049 425.5L1065 419.5L1066.5 424.5L1050.5 431z" fill="#111" stroke="#111" stroke-width="0.9" stroke-linejoin="round" stroke-linecap="round" />
<path d="M1053 425l0.6 4M1056 424l0.6 4M1059 423l0.6 4M1062 422l0.6 4" fill="none" stroke="#fff" stroke-width="0.6" stroke-linejoin="round" stroke-linecap="round" />
<ellipse cx="1049.8" cy="428.2" rx="1.5" ry="2.8" fill="#888" stroke="#111" stroke-width="0.5" transform="rotate(-15 1049.8 428.2)" />
<path d="M1064 416L1069 414.5L1073 417L1074 424L1071 427.5L1066 428.5z" fill="#fff" stroke="#111" stroke-width="1.1" stroke-linejoin="round" stroke-linecap="round" />
<path d="M1069 414.5L1069.5 421.5L1071 427.5M1064.5 419l5 2.5l4.5 -3" fill="none" stroke="#111" stroke-width="0.8" stroke-linejoin="round" stroke-linecap="round" />
<text x="1066.4" y="434.5" font-family="'Liberation Sans',sans-serif" font-size="5.2" font-weight="bold" fill="#111" text-anchor="middle">110</text>
<ellipse cx="917.9" cy="359.3" rx="4.6" ry="6.2" fill="#fff" stroke="#111" stroke-width="1.7" transform="rotate(-20 917.9 359.3)" />
<ellipse cx="918.3" cy="359.3" rx="2.6" ry="3.8" fill="#fff" stroke="#111" stroke-width="0.7" transform="rotate(-20 918.3 359.3)" />
<text x="916.4" y="350.1" font-family="'Liberation Sans',sans-serif" font-size="5.2" font-weight="bold" fill="#111" text-anchor="middle">50</text>
<ellipse cx="911" cy="373.8" rx="5" ry="6.6" fill="#fff" stroke="#111" stroke-width="1.5" transform="rotate(-20 911 373.8)" />
<ellipse cx="911.4" cy="373.8" rx="3" ry="4.2" fill="#fff" stroke="#111" stroke-width="0.7" transform="rotate(-20 911.4 373.8)" />
<text x="907.9" y="365.8" font-family="'Liberation Sans',sans-serif" font-size="5.2" font-weight="bold" fill="#111" text-anchor="middle">51</text>
<path d="M907.5 370l3.5 -2.5l3.5 1.5" fill="none" stroke="#111" stroke-width="0.9" stroke-linejoin="round" stroke-linecap="round" />
<ellipse cx="905" cy="393.6" rx="5" ry="6.6" fill="#fff" stroke="#111" stroke-width="1.5" transform="rotate(-20 905 393.6)" />
<ellipse cx="905.4" cy="393.6" rx="3" ry="4.2" fill="#fff" stroke="#111" stroke-width="0.7" transform="rotate(-20 905.4 393.6)" />
<text x="902.9" y="384.7" font-family="'Liberation Sans',sans-serif" font-size="5.2" font-weight="bold" fill="#111" text-anchor="middle">55</text>
<path d="M901.5 390l3.5 -2.5l3.5 1.5" fill="none" stroke="#111" stroke-width="0.9" stroke-linejoin="round" stroke-linecap="round" />
<ellipse cx="897.1" cy="421.4" rx="4.6" ry="6.2" fill="#fff" stroke="#111" stroke-width="1.1" transform="rotate(-20 897.1 421.4)" />
<ellipse cx="897.3" cy="421.4" rx="3" ry="4.4" fill="#fff" stroke="#111" stroke-width="0.8" transform="rotate(-20 897.3 421.4)" />
<path d="M893 417.5l-0.8 -1M896 415l-0.3 -1.200M900.5 417l1 -0.800M901.5 423l1.2 0.300M898.5 427.5l0.4 1.200M893.5 425.5l-1 0.8" fill="none" stroke="#111" stroke-width="1.0" stroke-linejoin="round" stroke-linecap="round" />
<text x="895" y="412.5" font-family="'Liberation Sans',sans-serif" font-size="5.2" font-weight="bold" fill="#111" text-anchor="middle">50</text>
<ellipse cx="910.7" cy="426.8" rx="5.3" ry="7.6" fill="#fff" stroke="#111" stroke-width="2.0" transform="rotate(-20 910.7 426.8)" />
<ellipse cx="911.2" cy="426.7" rx="3" ry="5" fill="#fff" stroke="#111" stroke-width="0.7" transform="rotate(-20 911.2 426.7)" />
<text x="913.6" y="440.4" font-family="'Liberation Sans',sans-serif" font-size="5.2" font-weight="bold" fill="#111" text-anchor="middle">531</text>
<ellipse cx="981.4" cy="464.3" rx="5.2" ry="6.6" fill="#fff" stroke="#111" stroke-width="1.8" transform="rotate(-20 981.4 464.3)" />
<ellipse cx="981.8" cy="464.3" rx="3.2" ry="4.2" fill="#fff" stroke="#111" stroke-width="0.7" transform="rotate(-20 981.8 464.3)" />
<text x="983.6" y="476.8" font-family="'Liberation Sans',sans-serif" font-size="5.2" font-weight="bold" fill="#111" text-anchor="middle">50</text>
<path d="M884.5 431.5L895.5 426.5L900 437.5L889.5 443.5z" fill="#111" stroke="#111" stroke-width="0.9" stroke-linejoin="round" stroke-linecap="round" />
<ellipse cx="897.8" cy="432.2" rx="3.6" ry="6.5" fill="#111" stroke="#111" stroke-width="0.9" transform="rotate(-24 897.8 432.2)" />
<path d="M888.5 431.5l4.5 10M891.5 430l4.5 10" fill="none" stroke="#fff" stroke-width="0.6" stroke-linejoin="round" stroke-linecap="round" />
<path d="M876.5 433L883.5 430L889.5 443.5L883 447.5L878 444z" fill="#fff" stroke="#111" stroke-width="1.2" stroke-linejoin="round" stroke-linecap="round" />
<path d="M879.5 432l5 14.5M883.5 430l-3.5 7l3 10" fill="none" stroke="#111" stroke-width="0.8" stroke-linejoin="round" stroke-linecap="round" />
<path d="M872 438.5L878 436L882 446L876 449z" fill="#fff" stroke="#111" stroke-width="1.1" stroke-linejoin="round" stroke-linecap="round" />
<path d="M874.5 437.5l4 10.5" fill="none" stroke="#111" stroke-width="1.4" stroke-linejoin="round" stroke-linecap="round" />
<path d="M860.5 446.300L873 440.5L876 447.5L863.5 454z" fill="#fff" stroke="#111" stroke-width="1.0" stroke-linejoin="round" stroke-linecap="round" />
<ellipse cx="861.5" cy="450.3" rx="2.6" ry="4.4" fill="#fff" stroke="#111" stroke-width="1.2" transform="rotate(-24 861.5 450.3)" />
<ellipse cx="866.5" cy="448" rx="2.6" ry="4.4" fill="none" stroke="#111" stroke-width="0.8" transform="rotate(-24 866.5 448)" />
<text x="881.4" y="456.3" font-family="'Liberation Sans',sans-serif" font-size="5.2" font-weight="bold" fill="#111" text-anchor="middle">520</text>
<path d="M834.8 470.7L851.7 464.3A4.7 7.6 -20.7 0 0 846.3 450.1L829.4 456.5A4.7 7.6 -20.7 0 0 834.8 470.7z" fill="#fff" stroke="#111" stroke-width="1.0" stroke-linejoin="round"/>
<ellipse cx="832.1" cy="463.6" rx="4.7" ry="7.6" fill="#fff" stroke="#111" stroke-width="1.0" transform="rotate(-20.7 832.1 463.6)" />
<ellipse cx="832.1" cy="463.6" rx="4.7" ry="7.6" fill="#fff" stroke="#111" stroke-width="1.4" transform="rotate(-20 832.1 463.6)" />
<path d="M838 455.5l3 13.5" fill="none" stroke="#111" stroke-width="0.8" stroke-linejoin="round" stroke-linecap="round" stroke-dasharray="1.2 1.2"/>
<text x="849.3" y="471.3" font-family="'Liberation Sans',sans-serif" font-size="5.2" font-weight="bold" fill="#111" text-anchor="middle">5/4</text>
<path d="M798.6 495L841.4 475C849 474.5 856 480 859.5 490C862 499 860.5 508 854.3 511.4L810.7 532.1z" fill="#fff" stroke="#111" stroke-width="1.0" stroke-linejoin="round" stroke-linecap="round" />
<ellipse cx="803.9" cy="513.2" rx="13.2" ry="20.2" fill="#fff" stroke="#111" stroke-width="1.1" transform="rotate(-22 803.9 513.2)" />
<ellipse cx="804.3" cy="513.2" rx="11.6" ry="18.4" fill="#fff" stroke="#111" stroke-width="0.9" transform="rotate(-22 804.3 513.2)" />
<path d="M797 497.5C806 499 814.5 509 817.5 521" fill="none" stroke="#111" stroke-width="0.8" stroke-linejoin="round" stroke-linecap="round" />
<text x="844.3" y="527.4" font-family="'Liberation Sans',sans-serif" font-size="5.2" font-weight="bold" fill="#111" text-anchor="middle">5/7</text>
<path d="M877.5 500.5L892 494L893.8 498L879.5 505.5z" fill="#111" stroke="#111" stroke-width="0.9" stroke-linejoin="round" stroke-linecap="round" />
<path d="M882 499.5l0.5 3.5M885 498l0.5 3.5M888 496.5l0.5 3.5" fill="none" stroke="#fff" stroke-width="0.6" stroke-linejoin="round" stroke-linecap="round" />
<path d="M871 502.5L876 499.5L880 503.5L879.5 508L875 510L871.5 507.5z" fill="#111" stroke="#111" stroke-width="0.9" stroke-linejoin="round" stroke-linecap="round" />
<path d="M873.5 503l1.5 4.5M876 501.5l1.5 5" fill="none" stroke="#fff" stroke-width="0.6" stroke-linejoin="round" stroke-linecap="round" />
<text x="890" y="510.6" font-family="'Liberation Sans',sans-serif" font-size="5.2" font-weight="bold" fill="#111" text-anchor="middle">521</text>
<path d="M928.9 438.7L937.1 437.5L938.3 448L941.8 458.6L940.6 469.1L937.1 472.6L936.5 480.7L930.1 480.7L927 470L927 448z" fill="#fff" stroke="#e0101c" stroke-width="1.0" stroke-linejoin="round" stroke-linecap="round" />
<ellipse cx="942" cy="452.7" rx="3.2" ry="6.2" fill="#fff" stroke="#e0101c" stroke-width="2.0" transform="rotate(-10 942 452.7)" />
<path d="M929.6 437.4L932.6 435.4L936.6 436.4L937.4 441L934.4 443.8L930.4 442.8z" fill="#fff" stroke="#e0101c" stroke-width="1.6" stroke-linejoin="round" stroke-linecap="round" />
<circle cx="933" cy="477.4" r="3.1" fill="#fff" stroke="#e0101c" stroke-width="1.8"/>
<path d="M912.6 447.5L930.1 442.2C933.5 446 935.5 454 935.5 461C935.5 467 934.5 470 933 472.5L926.6 474.9L898.6 486.6L895 471.4L895 460.9C897 453 904 448.5 912.6 447.5z" fill="#fff" stroke="#e0101c" stroke-width="1.0" stroke-linejoin="round" stroke-linecap="round" />
<path d="M926.6 449.2C929.5 452 930.5 457 930.3 463C930 468 929 471.5 927.2 473.7" fill="none" stroke="#e0101c" stroke-width="0.9" stroke-linejoin="round" stroke-linecap="round" />
<path d="M920.5 445.2C924 449 925.5 456 925.3 462" fill="none" stroke="#e0101c" stroke-width="0.9" stroke-linejoin="round" stroke-linecap="round" />
<path d="M914.9 453.9C908 453.5 901.5 457.5 898.6 464.4" fill="none" stroke="#e0101c" stroke-width="0.9" stroke-linejoin="round" stroke-linecap="round" />
<path d="M916.1 458.6C910.5 458 905.5 461 903.2 466.7" fill="none" stroke="#e0101c" stroke-width="0.9" stroke-linejoin="round" stroke-linecap="round" />
<path d="M913 448.5l2.5 5.5M916.5 459l1.5 5" fill="none" stroke="#e0101c" stroke-width="0.9" stroke-linejoin="round" stroke-linecap="round" />
<path d="M895 471.4L918.4 464.4L918.4 474.9L911.4 477.5L911.4 483.1L898.6 486.6" fill="none" stroke="#e0101c" stroke-width="1.0" stroke-linejoin="round" stroke-linecap="round" />
<path d="M911.4 471.4V477.5M903.2 466.7L903.8 469" fill="none" stroke="#e0101c" stroke-width="0.9" stroke-linejoin="round" stroke-linecap="round" />
<path d="M911.4 477.5L926.6 471.5" fill="none" stroke="#e0101c" stroke-width="0.9" stroke-linejoin="round" stroke-linecap="round" />
<rect x="914.6" y="475.6" width="3" height="4" fill="#e0101c"/>
<circle cx="902.6" cy="483.1" r="1.7" fill="#fff" stroke="#e0101c" stroke-width="1.0"/>
<path d="M889.6 476C889.5 472.5 891.3 470.8 894 471.200L897.8 475L898.9 487L896 491L891.5 490.5C890.2 486 889.7 481 889.6 476z" fill="#fff" stroke="#e0101c" stroke-width="1.5" stroke-linejoin="round" stroke-linecap="round" />
<path d="M895 474.5C897 478.5 897.6 483.5 896.6 488" fill="none" stroke="#e0101c" stroke-width="2.4" stroke-linejoin="round" stroke-linecap="round" />
<path d="M859.5 487L894 472" fill="none" stroke="#111" stroke-width="0.9" stroke-linejoin="round" />
<path d="M893 495L935 475.5" fill="none" stroke="#111" stroke-width="0.9" stroke-linejoin="round" />
<circle cx="937.1" cy="489.1" r="5.4" fill="#fff" stroke="#e0101c" stroke-width="1.0"/>
<text x="937.1" y="490.8" font-family="'Liberation Sans',sans-serif" font-size="4.4" font-weight="bold" fill="#e0101c" text-anchor="middle">530</text>
</g>
</svg>

<!-- text layer -->
<div class="t" style="left:-8px;top:-6.2px;font-size:17px;line-height:20px;color:#3a3a3a;transform:scaleX(0.921);font-family:'DejaVu Sans','Liberation Sans',sans-serif;-webkit-text-stroke:0.3px #3a3a3a;">HG5FJ1T</div>
<div class="t" style="left:113px;top:-3.7px;font-size:16.5px;line-height:20px;color:#e9963f;transform:scaleX(0.979);font-family:'DejaVu Sans','Liberation Sans',sans-serif;-webkit-text-stroke:0.3px #e9963f;">120ms</div>
<div class="t" style="left:309px;top:-4.9px;font-size:16.5px;line-height:20px;color:#3a3a3a;transform:scaleX(1.005);font-family:'DejaVu Sans','Liberation Sans',sans-serif;-webkit-text-stroke:0.3px #3a3a3a;">376130217</div>
<div class="t" style="left:527px;top:-3.7px;font-size:16.5px;line-height:20px;color:#2cae5c;transform:scaleX(1.029);font-family:'DejaVu Sans','Liberation Sans',sans-serif;-webkit-text-stroke:0.3px #2cae5c;">32ms</div>
<div class="t" style="left:5.5px;top:26.0px;font-size:12px;line-height:14px;color:#111;transform:scaleX(0.934);">ESI[tronic] - Produto Peças de reposição</div>
<div class="t" style="left:-9px;top:46.5px;font-size:12px;line-height:14px;color:#111;transform:scaleX(0.983);">Arquivo</div>
<div class="t" style="left:45px;top:46.5px;font-size:12px;line-height:14px;color:#111;transform:scaleX(0.946);">Definições</div>
<div class="t" style="left:112px;top:46.5px;font-size:12px;line-height:14px;color:#111;transform:scaleX(0.673);">?</div>
<div class="t" style="left:211px;top:75.8px;font-size:12px;line-height:14px;color:#111;transform:scaleX(0.857);">0 445 020 137 - Bomba de alta pressão, sistema CR - CR/CP3HS3/L110/30-789S</div>
<div class="t" style="left:0px;top:85.5px;font-size:7px;line-height:8px;color:#b4b4b4;transform:scaleX(1.039);">F11</div>
<div class="t" style="left:26px;top:85.5px;font-size:7px;line-height:8px;color:#b4b4b4;transform:scaleX(0.953);">F12</div>
<div class="t" style="left:56px;top:85.0px;font-size:7.5px;line-height:9px;color:#000;transform:scaleX(0.973);font-weight:bold;">ESC</div>
<div class="t" style="left:92px;top:85.0px;font-size:7.5px;line-height:9px;color:#000;transform:scaleX(0.913);font-weight:bold;">F9</div>
<div class="t" style="left:116px;top:85.5px;font-size:7px;line-height:8px;color:#b4b4b4;transform:scaleX(0.995);">F10</div>
<div class="t" style="left:-3.5px;top:131.6px;font-size:12px;line-height:14px;color:#0a2a66;transform:scaleX(0.938);-webkit-text-stroke:0.35px #0a2a66;">Tipos de números</div>
<div class="t" style="left:-3.5px;top:149.6px;font-size:12px;line-height:14px;color:#0a2a66;transform:scaleX(0.956);-webkit-text-stroke:0.35px #0a2a66;">Últimos 30 produtos</div>
<div class="t" style="left:-3.5px;top:167.6px;font-size:12px;line-height:14px;color:#0a2a66;transform:scaleX(0.915);-webkit-text-stroke:0.35px #0a2a66;">Últimos 30 valores de tes...</div>
<div class="t" style="left:-3.5px;top:194.6px;font-size:12px;line-height:14px;color:#638bc0;transform:scaleX(0.940);text-shadow:1px 1px 0 #a3d2ff;">Equipamento</div>
<div class="t" style="left:-3.5px;top:212.6px;font-size:12px;line-height:14px;color:#638bc0;transform:scaleX(0.916);text-shadow:1px 1px 0 #a3d2ff;">Valores de trabalho</div>
<div class="t" style="left:-3.5px;top:230.6px;font-size:12px;line-height:14px;color:#638bc0;transform:scaleX(0.912);text-shadow:1px 1px 0 #a3d2ff;">Esquemas elétricos</div>
<div class="t" style="left:-3.5px;top:249.1px;font-size:12px;line-height:14px;color:#638bc0;transform:scaleX(0.834);text-shadow:1px 1px 0 #a3d2ff;">SIS/CAS</div>
<div class="t" style="left:10.8px;top:267.6px;font-size:12px;line-height:14px;color:#638bc0;transform:scaleX(0.946);text-shadow:1px 1px 0 #a3d2ff;">Informações sobre ma..</div>
<div class="t" style="left:10.8px;top:285.6px;font-size:12px;line-height:14px;color:#638bc0;transform:scaleX(0.941);text-shadow:1px 1px 0 #a3d2ff;">Informações genéricas</div>
<div class="t" style="left:10.8px;top:304.1px;font-size:12px;line-height:14px;color:#0a2a66;transform:scaleX(0.974);-webkit-text-stroke:0.35px #0a2a66;">n.º interno do manual</div>
<div class="t" style="left:-3.5px;top:322.6px;font-size:12px;line-height:14px;color:#638bc0;transform:scaleX(0.952);text-shadow:1px 1px 0 #a3d2ff;">Inform. serviço técnica</div>
<div class="t" style="left:-3.5px;top:340.6px;font-size:12px;line-height:14px;color:#638bc0;transform:scaleX(0.931);text-shadow:1px 1px 0 #a3d2ff;">Banco de dados de conh...</div>
<div class="t" style="left:-3.5px;top:359.1px;font-size:12px;line-height:14px;color:#638bc0;transform:scaleX(0.929);text-shadow:1px 1px 0 #a3d2ff;">Aparelho de teste de dia...</div>
<div class="t" style="left:10.8px;top:377.1px;font-size:12px;line-height:14px;color:#638bc0;transform:scaleX(0.938);text-shadow:1px 1px 0 #a3d2ff;">Ligação no veículo</div>
<div class="t" style="left:10.8px;top:395.6px;font-size:12px;line-height:14px;color:#638bc0;transform:scaleX(0.971);text-shadow:1px 1px 0 #a3d2ff;">Importante</div>
<div class="t" style="left:-3.5px;top:413.6px;font-size:12px;line-height:14px;color:#fff;transform:scaleX(0.898);-webkit-text-stroke:0.3px #fff;">Peças de reposição</div>
<div class="t" style="left:-3.5px;top:432.1px;font-size:12px;line-height:14px;color:#638bc0;transform:scaleX(0.944);text-shadow:1px 1px 0 #a3d2ff;">Manuais sobre compone...</div>
<div class="t" style="left:10.8px;top:450.6px;font-size:12px;line-height:14px;color:#0a2a66;transform:scaleX(0.935);-webkit-text-stroke:0.35px #0a2a66;">Informações genéricas</div>
<div class="t" style="left:-3.5px;top:468.6px;font-size:12px;line-height:14px;color:#638bc0;transform:scaleX(0.921);text-shadow:1px 1px 0 #a3d2ff;">Valores de teste para bo..</div>
<div class="t" style="left:-3.5px;top:487.1px;font-size:12px;line-height:14px;color:#638bc0;transform:scaleX(0.943);text-shadow:1px 1px 0 #a3d2ff;">Intervalos de manutenção</div>
<div class="t" style="left:-3.5px;top:505.1px;font-size:12px;line-height:14px;color:#638bc0;transform:scaleX(0.889);text-shadow:1px 1px 0 #a3d2ff;">Peças de desgaste</div>
<div class="t" style="left:-3.5px;top:523.6px;font-size:12px;line-height:14px;color:#638bc0;transform:scaleX(0.925);text-shadow:1px 1px 0 #a3d2ff;">Mecânica</div>
<div class="t" style="left:-3.5px;top:541.6px;font-size:12px;line-height:14px;color:#0a2a66;transform:scaleX(0.963);-webkit-text-stroke:0.35px #0a2a66;">Confrontação</div>
<div class="t" style="left:-3.5px;top:560.1px;font-size:12px;line-height:14px;color:#638bc0;transform:scaleX(0.941);text-shadow:1px 1px 0 #a3d2ff;">Utilização Prod.=&gt;veic.</div>
<div class="t" style="left:-3.5px;top:578.6px;font-size:12px;line-height:14px;color:#0a2a66;transform:scaleX(0.946);-webkit-text-stroke:0.35px #0a2a66;">Utilização Peça=&gt;prod.</div>
<div class="t" style="left:-3.5px;top:596.6px;font-size:12px;line-height:14px;color:#638bc0;transform:scaleX(0.936);text-shadow:1px 1px 0 #a3d2ff;">Combinações</div>
<div class="t" style="left:-3.5px;top:615.1px;font-size:12px;line-height:14px;color:#0a2a66;transform:scaleX(0.913);-webkit-text-stroke:0.35px #0a2a66;">Interfaces</div>
<div class="t" style="left:-3.5px;top:633.6px;font-size:12px;line-height:14px;color:#0a2a66;transform:scaleX(0.931);-webkit-text-stroke:0.35px #0a2a66;">Ficha de trabalho</div>
<div class="t" style="left:209px;top:554.0px;font-size:12px;line-height:14px;color:#111;transform:scaleX(0.937);">Posição</div>
<div class="t" style="left:349px;top:554.0px;font-size:12px;line-height:14px;color:#111;transform:scaleX(0.966);">N.º de pedido</div>
<div class="t" style="left:558px;top:554.0px;font-size:12px;line-height:14px;color:#111;transform:scaleX(0.970);">Informaç...</div>
<div class="t" style="left:628px;top:554.0px;font-size:12px;line-height:14px;color:#111;transform:scaleX(0.967);">Quantidade</div>
<div class="t" style="left:732px;top:554.0px;font-size:12px;line-height:14px;color:#111;transform:scaleX(0.959);">Denominação</div>
<div class="t" style="left:209px;top:572.3px;font-size:12px;line-height:14px;color:#fff;transform:scaleX(0.936);">16</div>
<div class="t" style="left:348px;top:572.3px;font-size:12px;line-height:14px;color:#fff;transform:scaleX(0.882);">F 00N 201 507</div>
<div class="t" style="left:558px;top:572.3px;font-size:12px;line-height:14px;color:#fff;transform:scaleX(0.936);">A</div>
<div class="t" style="left:627.2px;top:572.3px;font-size:12px;line-height:14px;color:#fff;transform:scaleX(0.927);">2</div>
<div class="t" style="left:731.5px;top:572.3px;font-size:12px;line-height:14px;color:#fff;transform:scaleX(0.909);">Bujao Roscado</div>
<div class="t" style="left:209px;top:587.7px;font-size:12px;line-height:14px;color:#222;transform:scaleX(0.936);">20</div>
<div class="t" style="left:348px;top:587.7px;font-size:12px;line-height:14px;color:#222;transform:scaleX(0.882);">F 00N 202 577</div>
<div class="t" style="left:558px;top:587.7px;font-size:12px;line-height:14px;color:#222;transform:scaleX(0.811);">B</div>
<div class="t" style="left:627.2px;top:587.7px;font-size:12px;line-height:14px;color:#222;transform:scaleX(0.927);">3</div>
<div class="t" style="left:731.5px;top:587.7px;font-size:12px;line-height:14px;color:#222;transform:scaleX(0.948);">(Pilao) Tucho</div>
<div class="t" style="left:209px;top:603.2px;font-size:12px;line-height:14px;color:#222;transform:scaleX(0.936);">21</div>
<div class="t" style="left:348px;top:603.2px;font-size:12px;line-height:14px;color:#222;transform:scaleX(0.882);">F 00N 200 141</div>
<div class="t" style="left:558px;top:603.2px;font-size:12px;line-height:14px;color:#222;transform:scaleX(0.936);">A</div>
<div class="t" style="left:627.2px;top:603.2px;font-size:12px;line-height:14px;color:#222;transform:scaleX(0.927);">3</div>
<div class="t" style="left:731.5px;top:603.2px;font-size:12px;line-height:14px;color:#222;transform:scaleX(0.913);">Mola De Pressao</div>
<div class="t" style="left:209px;top:618.6px;font-size:12px;line-height:14px;color:#222;transform:scaleX(0.936);">30</div>
<div class="t" style="left:348px;top:618.6px;font-size:12px;line-height:14px;color:#222;transform:scaleX(0.882);">F 00N 201 745</div>
<div class="t" style="left:558px;top:618.6px;font-size:12px;line-height:14px;color:#222;transform:scaleX(0.936);">A</div>
<div class="t" style="left:627.2px;top:618.6px;font-size:12px;line-height:14px;color:#222;transform:scaleX(0.927);">3</div>
<div class="t" style="left:731.5px;top:618.6px;font-size:12px;line-height:14px;color:#222;transform:scaleX(0.964);">Anel-O</div>
<div class="t" style="left:209px;top:634.0px;font-size:12px;line-height:14px;color:#222;transform:scaleX(0.936);">31</div>
<div class="t" style="left:348px;top:634.0px;font-size:12px;line-height:14px;color:#222;transform:scaleX(0.882);">F 00N 201 745</div>
<div class="t" style="left:558px;top:634.0px;font-size:12px;line-height:14px;color:#222;transform:scaleX(0.936);">A</div>
<div class="t" style="left:627.2px;top:634.0px;font-size:12px;line-height:14px;color:#222;transform:scaleX(0.927);">1</div>
<div class="t" style="left:731.5px;top:634.0px;font-size:12px;line-height:14px;color:#222;transform:scaleX(0.964);">Anel-O</div>
<div class="t" style="left:209px;top:649.4px;font-size:12px;line-height:14px;color:#222;transform:scaleX(0.936);">33</div>
<div class="t" style="left:348px;top:649.4px;font-size:12px;line-height:14px;color:#222;transform:scaleX(0.882);">F 00N 201 745</div>
<div class="t" style="left:558px;top:649.4px;font-size:12px;line-height:14px;color:#222;transform:scaleX(0.936);">A</div>
<div class="t" style="left:627.2px;top:649.4px;font-size:12px;line-height:14px;color:#222;transform:scaleX(0.927);">1</div>
<div class="t" style="left:731.5px;top:649.4px;font-size:12px;line-height:14px;color:#222;transform:scaleX(0.964);">Anel-O</div>
<div class="t" style="left:209px;top:664.9px;font-size:12px;line-height:14px;color:#222;transform:scaleX(0.936);">35</div>
<div class="t" style="left:348px;top:664.9px;font-size:12px;line-height:14px;color:#222;transform:scaleX(0.867);">F 00R 0P0 341</div>
<div class="t" style="left:558px;top:664.9px;font-size:12px;line-height:14px;color:#222;transform:scaleX(0.936);">A</div>
<div class="t" style="left:627.2px;top:664.9px;font-size:12px;line-height:14px;color:#222;transform:scaleX(0.927);">1</div>
<div class="t" style="left:731.5px;top:664.9px;font-size:12px;line-height:14px;color:#222;transform:scaleX(0.964);">Anel-O</div>
<div class="t" style="left:209px;top:680.3px;font-size:12px;line-height:14px;color:#000;transform:scaleX(0.997);font-weight:bold;">100</div>
<div class="t" style="left:348px;top:680.3px;font-size:12px;line-height:14px;color:#000;transform:scaleX(0.920);font-weight:bold;">F 00N 204 423</div>
<div class="t" style="left:558px;top:680.3px;font-size:12px;line-height:14px;color:#000;transform:scaleX(0.750);font-weight:bold;">B</div>
<div class="t" style="left:627.2px;top:680.3px;font-size:12px;line-height:14px;color:#000;transform:scaleX(0.987);font-weight:bold;">1</div>
<div class="t" style="left:731.5px;top:680.3px;font-size:12px;line-height:14px;color:#000;transform:scaleX(0.866);font-weight:bold;">Flange</div>
<div class="t" style="left:209px;top:695.7px;font-size:12px;line-height:14px;color:#000;transform:scaleX(0.997);font-weight:bold;">100</div>
<div class="t" style="left:348px;top:695.7px;font-size:12px;line-height:14px;color:#000;transform:scaleX(0.920);font-weight:bold;">F 00N 203 275</div>
<div class="t" style="left:558px;top:695.7px;font-size:12px;line-height:14px;color:#000;transform:scaleX(0.750);font-weight:bold;">B</div>
<div class="t" style="left:627.2px;top:695.7px;font-size:12px;line-height:14px;color:#000;transform:scaleX(0.987);font-weight:bold;">1</div>
<div class="t" style="left:731.5px;top:695.7px;font-size:12px;line-height:14px;color:#000;transform:scaleX(0.866);font-weight:bold;">Flange</div>
<div class="t" style="left:209px;top:711.2px;font-size:12px;line-height:14px;color:#222;transform:scaleX(0.967);">110</div>
<div class="t" style="left:348px;top:711.2px;font-size:12px;line-height:14px;color:#222;transform:scaleX(0.882);">F 00N 202 191</div>
<div class="t" style="left:558px;top:711.2px;font-size:12px;line-height:14px;color:#222;transform:scaleX(0.811);">B</div>
<div class="t" style="left:627.2px;top:711.2px;font-size:12px;line-height:14px;color:#222;transform:scaleX(0.927);">6</div>
<div class="t" style="left:731.5px;top:711.2px;font-size:12px;line-height:14px;color:#222;transform:scaleX(0.918);">Paraf Cabeça Cil Torx</div>
<div class="t" style="left:209px;top:726.6px;font-size:12px;line-height:14px;color:#222;transform:scaleX(0.924);">120</div>
<div class="t" style="left:348px;top:726.6px;font-size:12px;line-height:14px;color:#222;transform:scaleX(0.867);">F 00R 0P0 352</div>
<div class="t" style="left:558px;top:726.6px;font-size:12px;line-height:14px;color:#222;transform:scaleX(0.936);">A</div>
<div class="t" style="left:627.2px;top:726.6px;font-size:12px;line-height:14px;color:#222;transform:scaleX(0.927);">1</div>
<div class="t" style="left:731.5px;top:726.6px;font-size:12px;line-height:14px;color:#222;transform:scaleX(0.964);">Anel-O</div>
<div class="t" style="left:209px;top:742.0px;font-size:12px;line-height:14px;color:#222;transform:scaleX(0.924);">140</div>
<div class="t" style="left:348px;top:742.0px;font-size:12px;line-height:14px;color:#222;transform:scaleX(0.882);">F 00N 201 306</div>
<div class="t" style="left:558px;top:742.0px;font-size:12px;line-height:14px;color:#222;transform:scaleX(0.936);">A</div>
<div class="t" style="left:627.2px;top:742.0px;font-size:12px;line-height:14px;color:#222;transform:scaleX(0.927);">1</div>
<div class="t" style="left:731.5px;top:742.0px;font-size:12px;line-height:14px;color:#222;transform:scaleX(0.964);">Anel-O</div>
<div class="t" style="left:209px;top:757.5px;font-size:12px;line-height:14px;color:#222;transform:scaleX(0.924);">205</div>
<div class="t" style="left:348px;top:757.5px;font-size:12px;line-height:14px;color:#222;transform:scaleX(0.882);">F 00N 202 990</div>
<div class="t" style="left:558px;top:757.5px;font-size:12px;line-height:14px;color:#222;transform:scaleX(0.811);">B</div>
<div class="t" style="left:627.2px;top:757.5px;font-size:12px;line-height:14px;color:#222;transform:scaleX(0.927);">1</div>
<div class="t" style="left:731.5px;top:757.5px;font-size:12px;line-height:14px;color:#222;transform:scaleX(0.931);">Eixo Excentrico</div>
</body>
</html>
